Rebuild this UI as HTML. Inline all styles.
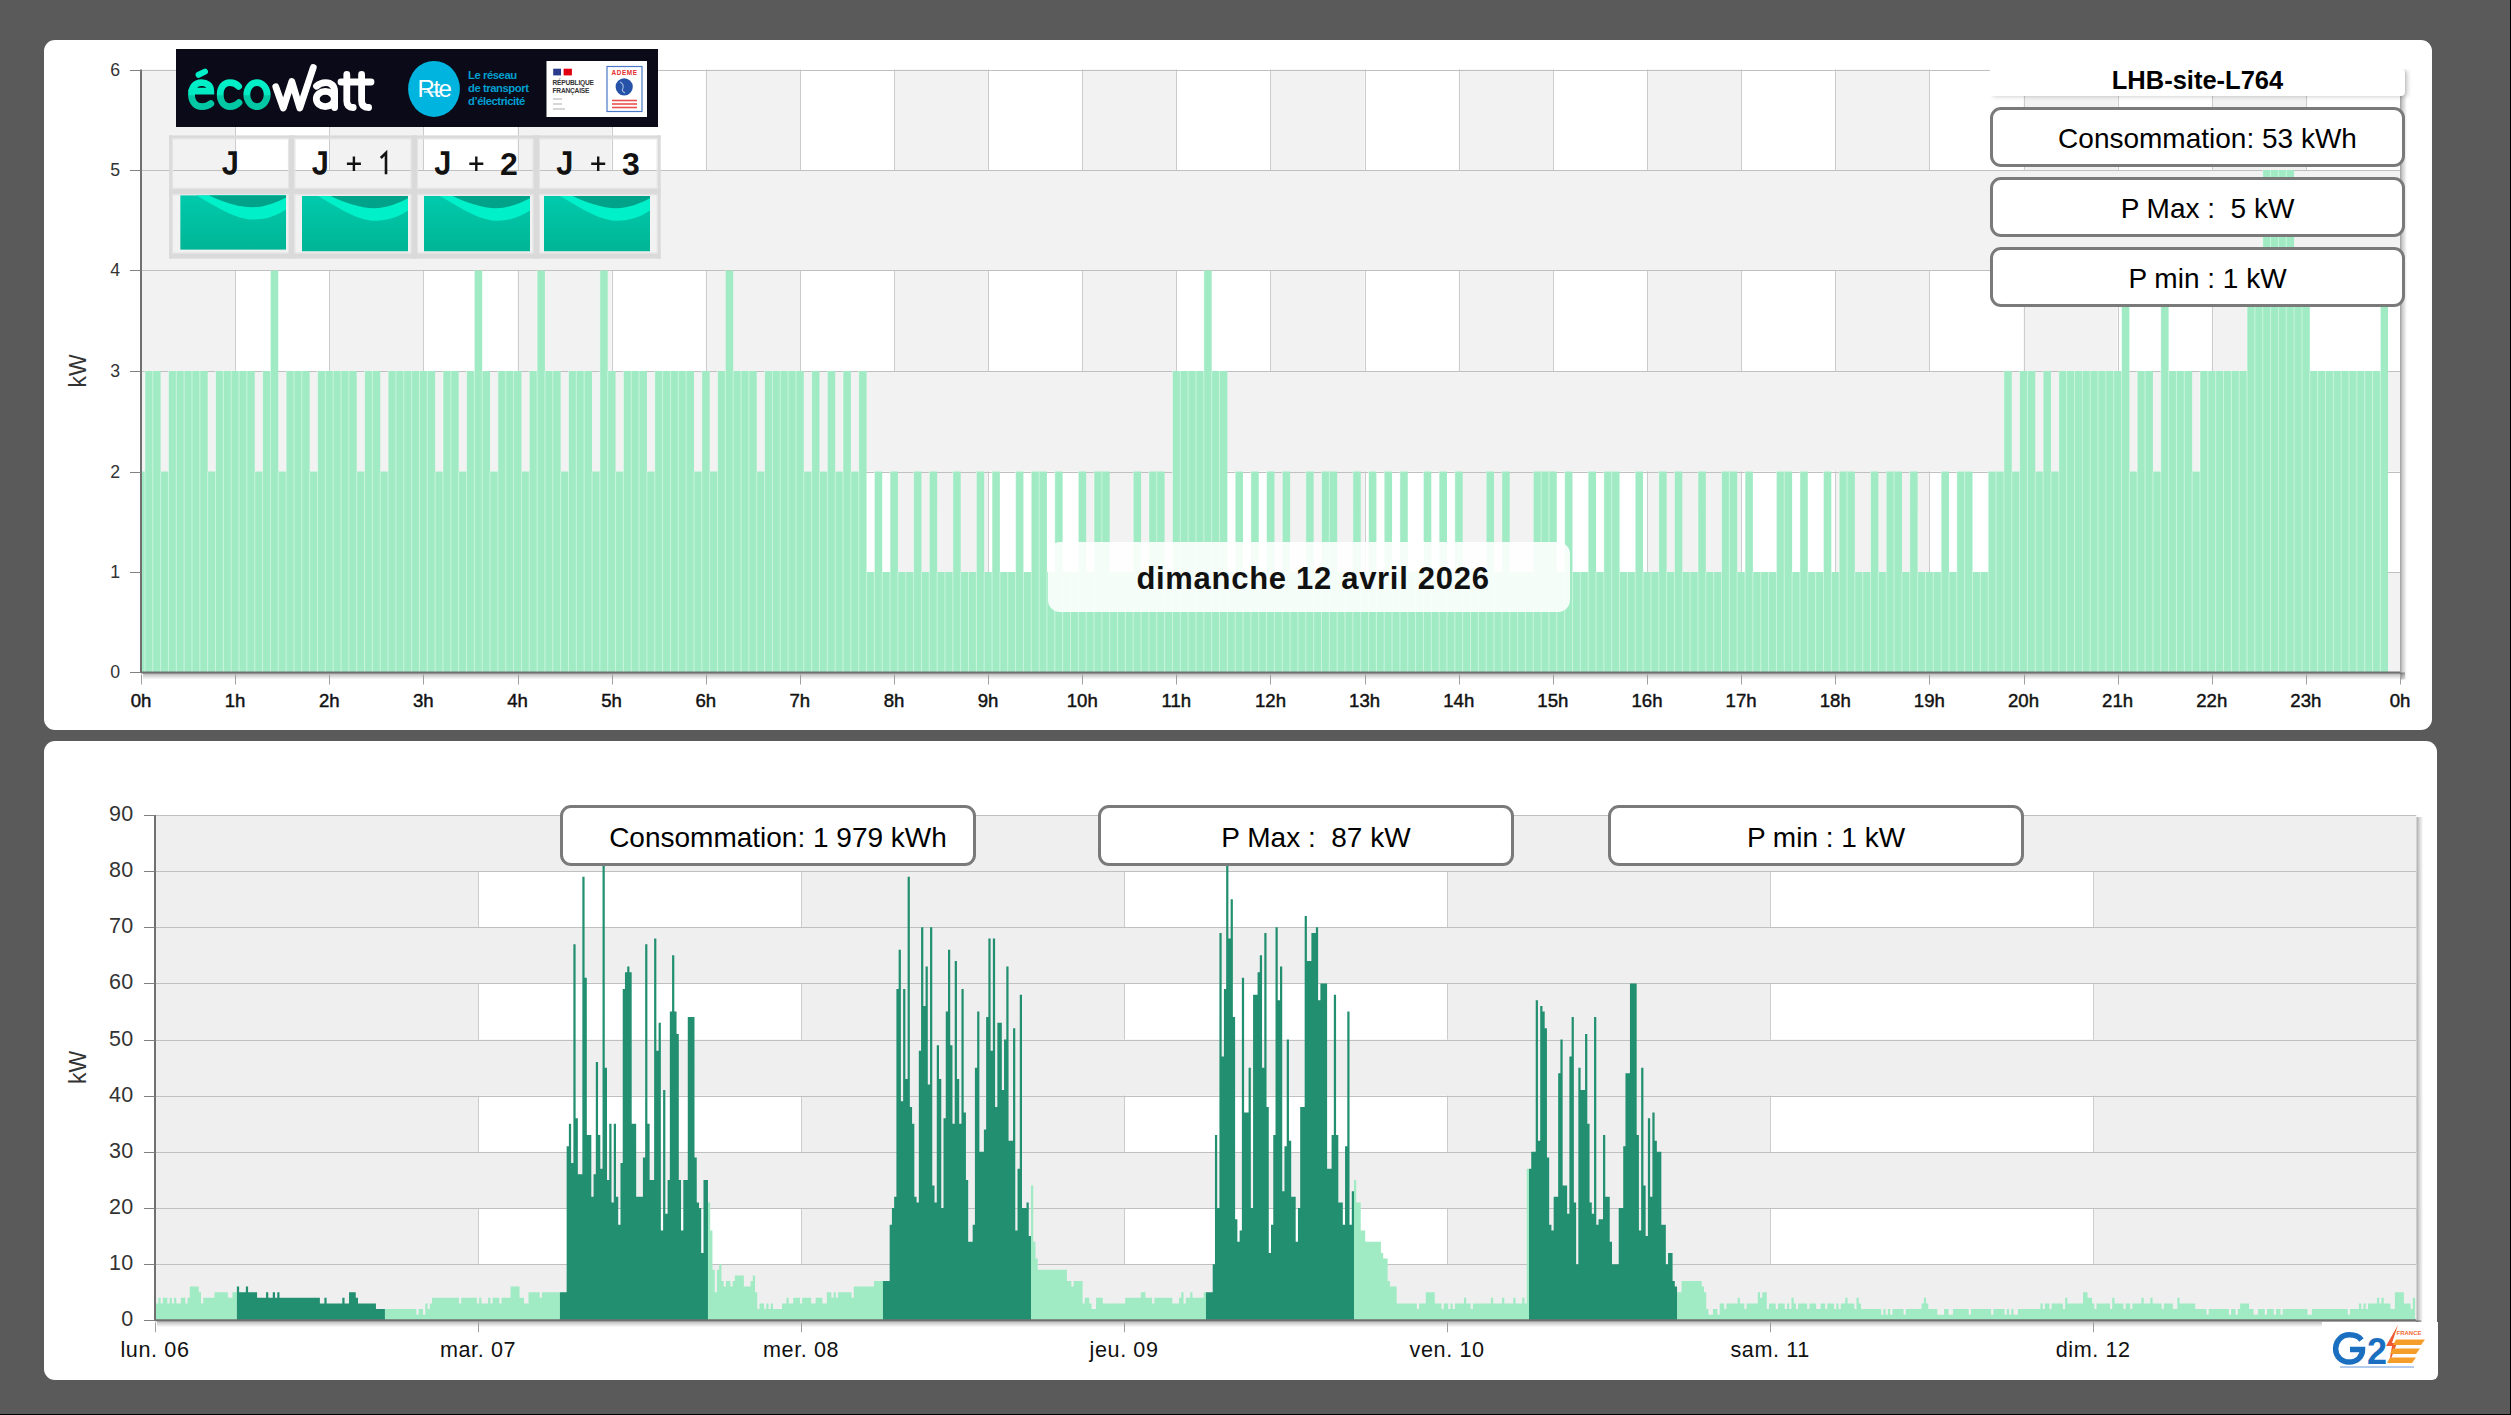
<!DOCTYPE html><html><head><meta charset="utf-8"><style>
html,body{margin:0;padding:0;}
body{width:2511px;height:1415px;background:#5a5a5a;position:relative;overflow:hidden;font-family:"Liberation Sans",sans-serif;}
.panel{position:absolute;background:#fff;border-radius:11px;}
svg{position:absolute;left:0;top:0;}
text{font-family:"Liberation Sans",sans-serif;}
</style></head><body>
<div class="panel" style="left:44px;top:40px;width:2388px;height:690px"></div>
<div class="panel" style="left:44px;top:741px;width:2393px;height:639px"></div>
<svg width="2511" height="1415" viewBox="0 0 2511 1415">
<defs><linearGradient id="shr" x1="0" y1="0" x2="1" y2="0"><stop offset="0" stop-color="#000" stop-opacity="0.38"/><stop offset="0.35" stop-color="#000" stop-opacity="0.2"/><stop offset="1" stop-color="#000" stop-opacity="0"/></linearGradient><linearGradient id="shb" x1="0" y1="0" x2="0" y2="1"><stop offset="0" stop-color="#000" stop-opacity="0.38"/><stop offset="0.35" stop-color="#000" stop-opacity="0.2"/><stop offset="1" stop-color="#000" stop-opacity="0"/></linearGradient></defs>
<defs><filter id="sh" x="-5%" y="-5%" width="110%" height="110%"><feGaussianBlur stdDeviation="2"/></filter><filter id="sh2" x="-10%" y="-10%" width="120%" height="130%"><feGaussianBlur stdDeviation="2.5"/></filter></defs>
<rect x="2400.0" y="71.5" width="7" height="608.0" fill="url(#shr)"/>
<rect x="143.0" y="672.5" width="2262.0" height="7" fill="url(#shb)"/>
<rect x="141.0" y="69.5" width="2259.0" height="603.0" fill="#fff"/>
<rect x="141.0" y="69.5" width="94.125" height="603.0" fill="#f2f2f2"/>
<rect x="329.25" y="69.5" width="94.125" height="603.0" fill="#f2f2f2"/>
<rect x="517.5" y="69.5" width="94.125" height="603.0" fill="#f2f2f2"/>
<rect x="705.75" y="69.5" width="94.125" height="603.0" fill="#f2f2f2"/>
<rect x="894.0" y="69.5" width="94.125" height="603.0" fill="#f2f2f2"/>
<rect x="1082.25" y="69.5" width="94.125" height="603.0" fill="#f2f2f2"/>
<rect x="1270.5" y="69.5" width="94.125" height="603.0" fill="#f2f2f2"/>
<rect x="1458.75" y="69.5" width="94.125" height="603.0" fill="#f2f2f2"/>
<rect x="1647.0" y="69.5" width="94.125" height="603.0" fill="#f2f2f2"/>
<rect x="1835.25" y="69.5" width="94.125" height="603.0" fill="#f2f2f2"/>
<rect x="2023.5" y="69.5" width="94.125" height="603.0" fill="#f2f2f2"/>
<rect x="2211.75" y="69.5" width="94.125" height="603.0" fill="#f2f2f2"/>
<line x1="235.5" y1="69.5" x2="235.5" y2="672.5" stroke="#cccccc" stroke-width="1"/>
<line x1="329.5" y1="69.5" x2="329.5" y2="672.5" stroke="#cccccc" stroke-width="1"/>
<line x1="423.5" y1="69.5" x2="423.5" y2="672.5" stroke="#cccccc" stroke-width="1"/>
<line x1="518.5" y1="69.5" x2="518.5" y2="672.5" stroke="#cccccc" stroke-width="1"/>
<line x1="612.5" y1="69.5" x2="612.5" y2="672.5" stroke="#cccccc" stroke-width="1"/>
<line x1="706.5" y1="69.5" x2="706.5" y2="672.5" stroke="#cccccc" stroke-width="1"/>
<line x1="800.5" y1="69.5" x2="800.5" y2="672.5" stroke="#cccccc" stroke-width="1"/>
<line x1="894.5" y1="69.5" x2="894.5" y2="672.5" stroke="#cccccc" stroke-width="1"/>
<line x1="988.5" y1="69.5" x2="988.5" y2="672.5" stroke="#cccccc" stroke-width="1"/>
<line x1="1082.5" y1="69.5" x2="1082.5" y2="672.5" stroke="#cccccc" stroke-width="1"/>
<line x1="1176.5" y1="69.5" x2="1176.5" y2="672.5" stroke="#cccccc" stroke-width="1"/>
<line x1="1270.5" y1="69.5" x2="1270.5" y2="672.5" stroke="#cccccc" stroke-width="1"/>
<line x1="1365.5" y1="69.5" x2="1365.5" y2="672.5" stroke="#cccccc" stroke-width="1"/>
<line x1="1459.5" y1="69.5" x2="1459.5" y2="672.5" stroke="#cccccc" stroke-width="1"/>
<line x1="1553.5" y1="69.5" x2="1553.5" y2="672.5" stroke="#cccccc" stroke-width="1"/>
<line x1="1647.5" y1="69.5" x2="1647.5" y2="672.5" stroke="#cccccc" stroke-width="1"/>
<line x1="1741.5" y1="69.5" x2="1741.5" y2="672.5" stroke="#cccccc" stroke-width="1"/>
<line x1="1835.5" y1="69.5" x2="1835.5" y2="672.5" stroke="#cccccc" stroke-width="1"/>
<line x1="1929.5" y1="69.5" x2="1929.5" y2="672.5" stroke="#cccccc" stroke-width="1"/>
<line x1="2024.5" y1="69.5" x2="2024.5" y2="672.5" stroke="#cccccc" stroke-width="1"/>
<line x1="2118.5" y1="69.5" x2="2118.5" y2="672.5" stroke="#cccccc" stroke-width="1"/>
<line x1="2212.5" y1="69.5" x2="2212.5" y2="672.5" stroke="#cccccc" stroke-width="1"/>
<line x1="2306.5" y1="69.5" x2="2306.5" y2="672.5" stroke="#cccccc" stroke-width="1"/>
<rect x="141.0" y="572.0" width="2259.0" height="100.5" fill="#f2f2f2"/>
<rect x="141.0" y="371.0" width="2259.0" height="100.5" fill="#f2f2f2"/>
<rect x="141.0" y="170.0" width="2259.0" height="100.5" fill="#f2f2f2"/>
<line x1="141.0" y1="572.5" x2="2400.0" y2="572.5" stroke="#c0c0c0" stroke-width="1"/>
<line x1="141.0" y1="472.5" x2="2400.0" y2="472.5" stroke="#c0c0c0" stroke-width="1"/>
<line x1="141.0" y1="371.5" x2="2400.0" y2="371.5" stroke="#c0c0c0" stroke-width="1"/>
<line x1="141.0" y1="270.5" x2="2400.0" y2="270.5" stroke="#c0c0c0" stroke-width="1"/>
<line x1="141.0" y1="170.5" x2="2400.0" y2="170.5" stroke="#c0c0c0" stroke-width="1"/>
<line x1="141.0" y1="70.5" x2="2400.0" y2="70.5" stroke="#c0c0c0" stroke-width="1"/>
<g clip-path="inset(0)">
<clipPath id="tc"><rect x="141.0" y="69.5" width="2259.0" height="603.0"/></clipPath>
<g clip-path="url(#tc)">
<path d="M137.08 471.50h7.844V672.5h-7.844ZM144.92 371.00h7.844V672.5h-7.844ZM152.77 371.00h7.844V672.5h-7.844ZM160.61 471.50h7.844V672.5h-7.844ZM168.45 371.00h7.844V672.5h-7.844ZM176.30 371.00h7.844V672.5h-7.844ZM184.14 371.00h7.844V672.5h-7.844ZM191.98 371.00h7.844V672.5h-7.844ZM199.83 371.00h7.844V672.5h-7.844ZM207.67 471.50h7.844V672.5h-7.844ZM215.52 371.00h7.844V672.5h-7.844ZM223.36 371.00h7.844V672.5h-7.844ZM231.20 371.00h7.844V672.5h-7.844ZM239.05 371.00h7.844V672.5h-7.844ZM246.89 371.00h7.844V672.5h-7.844ZM254.73 471.50h7.844V672.5h-7.844ZM262.58 371.00h7.844V672.5h-7.844ZM270.42 270.50h7.844V672.5h-7.844ZM278.27 471.50h7.844V672.5h-7.844ZM286.11 371.00h7.844V672.5h-7.844ZM293.95 371.00h7.844V672.5h-7.844ZM301.80 371.00h7.844V672.5h-7.844ZM309.64 471.50h7.844V672.5h-7.844ZM317.48 371.00h7.844V672.5h-7.844ZM325.33 371.00h7.844V672.5h-7.844ZM333.17 371.00h7.844V672.5h-7.844ZM341.02 371.00h7.844V672.5h-7.844ZM348.86 371.00h7.844V672.5h-7.844ZM356.70 471.50h7.844V672.5h-7.844ZM364.55 371.00h7.844V672.5h-7.844ZM372.39 371.00h7.844V672.5h-7.844ZM380.23 471.50h7.844V672.5h-7.844ZM388.08 371.00h7.844V672.5h-7.844ZM395.92 371.00h7.844V672.5h-7.844ZM403.77 371.00h7.844V672.5h-7.844ZM411.61 371.00h7.844V672.5h-7.844ZM419.45 371.00h7.844V672.5h-7.844ZM427.30 371.00h7.844V672.5h-7.844ZM435.14 471.50h7.844V672.5h-7.844ZM442.98 371.00h7.844V672.5h-7.844ZM450.83 371.00h7.844V672.5h-7.844ZM458.67 471.50h7.844V672.5h-7.844ZM466.52 371.00h7.844V672.5h-7.844ZM474.36 270.50h7.844V672.5h-7.844ZM482.20 371.00h7.844V672.5h-7.844ZM490.05 471.50h7.844V672.5h-7.844ZM497.89 371.00h7.844V672.5h-7.844ZM505.73 371.00h7.844V672.5h-7.844ZM513.58 371.00h7.844V672.5h-7.844ZM521.42 471.50h7.844V672.5h-7.844ZM529.27 371.00h7.844V672.5h-7.844ZM537.11 270.50h7.844V672.5h-7.844ZM544.95 371.00h7.844V672.5h-7.844ZM552.80 371.00h7.844V672.5h-7.844ZM560.64 471.50h7.844V672.5h-7.844ZM568.48 371.00h7.844V672.5h-7.844ZM576.33 371.00h7.844V672.5h-7.844ZM584.17 371.00h7.844V672.5h-7.844ZM592.02 471.50h7.844V672.5h-7.844ZM599.86 270.50h7.844V672.5h-7.844ZM607.70 371.00h7.844V672.5h-7.844ZM615.55 471.50h7.844V672.5h-7.844ZM623.39 371.00h7.844V672.5h-7.844ZM631.23 371.00h7.844V672.5h-7.844ZM639.08 371.00h7.844V672.5h-7.844ZM646.92 471.50h7.844V672.5h-7.844ZM654.77 371.00h7.844V672.5h-7.844ZM662.61 371.00h7.844V672.5h-7.844ZM670.45 371.00h7.844V672.5h-7.844ZM678.30 371.00h7.844V672.5h-7.844ZM686.14 371.00h7.844V672.5h-7.844ZM693.98 471.50h7.844V672.5h-7.844ZM701.83 371.00h7.844V672.5h-7.844ZM709.67 471.50h7.844V672.5h-7.844ZM717.52 371.00h7.844V672.5h-7.844ZM725.36 270.50h7.844V672.5h-7.844ZM733.20 371.00h7.844V672.5h-7.844ZM741.05 371.00h7.844V672.5h-7.844ZM748.89 371.00h7.844V672.5h-7.844ZM756.73 471.50h7.844V672.5h-7.844ZM764.58 371.00h7.844V672.5h-7.844ZM772.42 371.00h7.844V672.5h-7.844ZM780.27 371.00h7.844V672.5h-7.844ZM788.11 371.00h7.844V672.5h-7.844ZM795.95 371.00h7.844V672.5h-7.844ZM803.80 471.50h7.844V672.5h-7.844ZM811.64 371.00h7.844V672.5h-7.844ZM819.48 471.50h7.844V672.5h-7.844ZM827.33 371.00h7.844V672.5h-7.844ZM835.17 471.50h7.844V672.5h-7.844ZM843.02 371.00h7.844V672.5h-7.844ZM850.86 471.50h7.844V672.5h-7.844ZM858.70 371.00h7.844V672.5h-7.844ZM866.55 572.00h7.844V672.5h-7.844ZM874.39 471.50h7.844V672.5h-7.844ZM882.23 572.00h7.844V672.5h-7.844ZM890.08 471.50h7.844V672.5h-7.844ZM897.92 572.00h7.844V672.5h-7.844ZM905.77 572.00h7.844V672.5h-7.844ZM913.61 471.50h7.844V672.5h-7.844ZM921.45 572.00h7.844V672.5h-7.844ZM929.30 471.50h7.844V672.5h-7.844ZM937.14 572.00h7.844V672.5h-7.844ZM944.98 572.00h7.844V672.5h-7.844ZM952.83 471.50h7.844V672.5h-7.844ZM960.67 572.00h7.844V672.5h-7.844ZM968.52 572.00h7.844V672.5h-7.844ZM976.36 471.50h7.844V672.5h-7.844ZM984.20 572.00h7.844V672.5h-7.844ZM992.05 471.50h7.844V672.5h-7.844ZM999.89 572.00h7.844V672.5h-7.844ZM1007.73 572.00h7.844V672.5h-7.844ZM1015.58 471.50h7.844V672.5h-7.844ZM1023.42 572.00h7.844V672.5h-7.844ZM1031.27 471.50h7.844V672.5h-7.844ZM1039.11 471.50h7.844V672.5h-7.844ZM1046.95 572.00h7.844V672.5h-7.844ZM1054.80 471.50h7.844V672.5h-7.844ZM1062.64 572.00h7.844V672.5h-7.844ZM1070.48 572.00h7.844V672.5h-7.844ZM1078.33 471.50h7.844V672.5h-7.844ZM1086.17 572.00h7.844V672.5h-7.844ZM1094.02 471.50h7.844V672.5h-7.844ZM1101.86 471.50h7.844V672.5h-7.844ZM1109.70 572.00h7.844V672.5h-7.844ZM1117.55 572.00h7.844V672.5h-7.844ZM1125.39 572.00h7.844V672.5h-7.844ZM1133.23 471.50h7.844V672.5h-7.844ZM1141.08 572.00h7.844V672.5h-7.844ZM1148.92 471.50h7.844V672.5h-7.844ZM1156.77 471.50h7.844V672.5h-7.844ZM1164.61 572.00h7.844V672.5h-7.844ZM1172.45 371.00h7.844V672.5h-7.844ZM1180.30 371.00h7.844V672.5h-7.844ZM1188.14 371.00h7.844V672.5h-7.844ZM1195.98 371.00h7.844V672.5h-7.844ZM1203.83 270.50h7.844V672.5h-7.844ZM1211.67 371.00h7.844V672.5h-7.844ZM1219.52 371.00h7.844V672.5h-7.844ZM1227.36 572.00h7.844V672.5h-7.844ZM1235.20 471.50h7.844V672.5h-7.844ZM1243.05 572.00h7.844V672.5h-7.844ZM1250.89 471.50h7.844V672.5h-7.844ZM1258.73 572.00h7.844V672.5h-7.844ZM1266.58 471.50h7.844V672.5h-7.844ZM1274.42 572.00h7.844V672.5h-7.844ZM1282.27 471.50h7.844V672.5h-7.844ZM1290.11 572.00h7.844V672.5h-7.844ZM1297.95 572.00h7.844V672.5h-7.844ZM1305.80 471.50h7.844V672.5h-7.844ZM1313.64 572.00h7.844V672.5h-7.844ZM1321.48 471.50h7.844V672.5h-7.844ZM1329.33 471.50h7.844V672.5h-7.844ZM1337.17 572.00h7.844V672.5h-7.844ZM1345.02 572.00h7.844V672.5h-7.844ZM1352.86 471.50h7.844V672.5h-7.844ZM1360.70 572.00h7.844V672.5h-7.844ZM1368.55 471.50h7.844V672.5h-7.844ZM1376.39 572.00h7.844V672.5h-7.844ZM1384.23 471.50h7.844V672.5h-7.844ZM1392.08 572.00h7.844V672.5h-7.844ZM1399.92 471.50h7.844V672.5h-7.844ZM1407.77 572.00h7.844V672.5h-7.844ZM1415.61 572.00h7.844V672.5h-7.844ZM1423.45 471.50h7.844V672.5h-7.844ZM1431.30 572.00h7.844V672.5h-7.844ZM1439.14 471.50h7.844V672.5h-7.844ZM1446.98 572.00h7.844V672.5h-7.844ZM1454.83 471.50h7.844V672.5h-7.844ZM1462.67 572.00h7.844V672.5h-7.844ZM1470.52 572.00h7.844V672.5h-7.844ZM1478.36 572.00h7.844V672.5h-7.844ZM1486.20 471.50h7.844V672.5h-7.844ZM1494.05 572.00h7.844V672.5h-7.844ZM1501.89 471.50h7.844V672.5h-7.844ZM1509.73 572.00h7.844V672.5h-7.844ZM1517.58 572.00h7.844V672.5h-7.844ZM1525.42 572.00h7.844V672.5h-7.844ZM1533.27 471.50h7.844V672.5h-7.844ZM1541.11 471.50h7.844V672.5h-7.844ZM1548.95 471.50h7.844V672.5h-7.844ZM1556.80 572.00h7.844V672.5h-7.844ZM1564.64 471.50h7.844V672.5h-7.844ZM1572.48 572.00h7.844V672.5h-7.844ZM1580.33 572.00h7.844V672.5h-7.844ZM1588.17 471.50h7.844V672.5h-7.844ZM1596.02 572.00h7.844V672.5h-7.844ZM1603.86 471.50h7.844V672.5h-7.844ZM1611.70 471.50h7.844V672.5h-7.844ZM1619.55 572.00h7.844V672.5h-7.844ZM1627.39 572.00h7.844V672.5h-7.844ZM1635.23 471.50h7.844V672.5h-7.844ZM1643.08 572.00h7.844V672.5h-7.844ZM1650.92 572.00h7.844V672.5h-7.844ZM1658.77 471.50h7.844V672.5h-7.844ZM1666.61 572.00h7.844V672.5h-7.844ZM1674.45 471.50h7.844V672.5h-7.844ZM1682.30 572.00h7.844V672.5h-7.844ZM1690.14 572.00h7.844V672.5h-7.844ZM1697.98 471.50h7.844V672.5h-7.844ZM1705.83 572.00h7.844V672.5h-7.844ZM1713.67 572.00h7.844V672.5h-7.844ZM1721.52 471.50h7.844V672.5h-7.844ZM1729.36 471.50h7.844V672.5h-7.844ZM1737.20 572.00h7.844V672.5h-7.844ZM1745.05 471.50h7.844V672.5h-7.844ZM1752.89 572.00h7.844V672.5h-7.844ZM1760.73 572.00h7.844V672.5h-7.844ZM1768.58 572.00h7.844V672.5h-7.844ZM1776.42 471.50h7.844V672.5h-7.844ZM1784.27 471.50h7.844V672.5h-7.844ZM1792.11 572.00h7.844V672.5h-7.844ZM1799.95 471.50h7.844V672.5h-7.844ZM1807.80 572.00h7.844V672.5h-7.844ZM1815.64 572.00h7.844V672.5h-7.844ZM1823.48 471.50h7.844V672.5h-7.844ZM1831.33 572.00h7.844V672.5h-7.844ZM1839.17 471.50h7.844V672.5h-7.844ZM1847.02 471.50h7.844V672.5h-7.844ZM1854.86 572.00h7.844V672.5h-7.844ZM1862.70 572.00h7.844V672.5h-7.844ZM1870.55 471.50h7.844V672.5h-7.844ZM1878.39 572.00h7.844V672.5h-7.844ZM1886.23 471.50h7.844V672.5h-7.844ZM1894.08 471.50h7.844V672.5h-7.844ZM1901.92 572.00h7.844V672.5h-7.844ZM1909.77 471.50h7.844V672.5h-7.844ZM1917.61 572.00h7.844V672.5h-7.844ZM1925.45 572.00h7.844V672.5h-7.844ZM1933.30 572.00h7.844V672.5h-7.844ZM1941.14 471.50h7.844V672.5h-7.844ZM1948.98 572.00h7.844V672.5h-7.844ZM1956.83 471.50h7.844V672.5h-7.844ZM1964.67 471.50h7.844V672.5h-7.844ZM1972.52 572.00h7.844V672.5h-7.844ZM1980.36 572.00h7.844V672.5h-7.844ZM1988.20 471.50h7.844V672.5h-7.844ZM1996.05 471.50h7.844V672.5h-7.844ZM2003.89 371.00h7.844V672.5h-7.844ZM2011.73 471.50h7.844V672.5h-7.844ZM2019.58 371.00h7.844V672.5h-7.844ZM2027.42 371.00h7.844V672.5h-7.844ZM2035.27 471.50h7.844V672.5h-7.844ZM2043.11 371.00h7.844V672.5h-7.844ZM2050.95 471.50h7.844V672.5h-7.844ZM2058.80 371.00h7.844V672.5h-7.844ZM2066.64 371.00h7.844V672.5h-7.844ZM2074.48 371.00h7.844V672.5h-7.844ZM2082.33 371.00h7.844V672.5h-7.844ZM2090.17 371.00h7.844V672.5h-7.844ZM2098.02 371.00h7.844V672.5h-7.844ZM2105.86 371.00h7.844V672.5h-7.844ZM2113.70 371.00h7.844V672.5h-7.844ZM2121.55 270.50h7.844V672.5h-7.844ZM2129.39 471.50h7.844V672.5h-7.844ZM2137.23 371.00h7.844V672.5h-7.844ZM2145.08 371.00h7.844V672.5h-7.844ZM2152.92 471.50h7.844V672.5h-7.844ZM2160.77 270.50h7.844V672.5h-7.844ZM2168.61 371.00h7.844V672.5h-7.844ZM2176.45 371.00h7.844V672.5h-7.844ZM2184.30 371.00h7.844V672.5h-7.844ZM2192.14 471.50h7.844V672.5h-7.844ZM2199.98 371.00h7.844V672.5h-7.844ZM2207.83 371.00h7.844V672.5h-7.844ZM2215.67 371.00h7.844V672.5h-7.844ZM2223.52 371.00h7.844V672.5h-7.844ZM2231.36 371.00h7.844V672.5h-7.844ZM2239.20 371.00h7.844V672.5h-7.844ZM2247.05 270.50h7.844V672.5h-7.844ZM2254.89 270.50h7.844V672.5h-7.844ZM2262.73 170.00h7.844V672.5h-7.844ZM2270.58 170.00h7.844V672.5h-7.844ZM2278.42 170.00h7.844V672.5h-7.844ZM2286.27 170.00h7.844V672.5h-7.844ZM2294.11 270.50h7.844V672.5h-7.844ZM2301.95 270.50h7.844V672.5h-7.844ZM2309.80 371.00h7.844V672.5h-7.844ZM2317.64 371.00h7.844V672.5h-7.844ZM2325.48 371.00h7.844V672.5h-7.844ZM2333.33 371.00h7.844V672.5h-7.844ZM2341.17 371.00h7.844V672.5h-7.844ZM2349.02 371.00h7.844V672.5h-7.844ZM2356.86 371.00h7.844V672.5h-7.844ZM2364.70 371.00h7.844V672.5h-7.844ZM2372.55 371.00h7.844V672.5h-7.844ZM2380.39 270.50h7.844V672.5h-7.844Z" fill="#a0ebc4"/>
<path d="M137.08 471.50V672.5M144.92 371.00V672.5M152.77 371.00V672.5M160.61 471.50V672.5M168.45 371.00V672.5M176.30 371.00V672.5M184.14 371.00V672.5M191.98 371.00V672.5M199.83 371.00V672.5M207.67 471.50V672.5M215.52 371.00V672.5M223.36 371.00V672.5M231.20 371.00V672.5M239.05 371.00V672.5M246.89 371.00V672.5M254.73 471.50V672.5M262.58 371.00V672.5M270.42 270.50V672.5M278.27 471.50V672.5M286.11 371.00V672.5M293.95 371.00V672.5M301.80 371.00V672.5M309.64 471.50V672.5M317.48 371.00V672.5M325.33 371.00V672.5M333.17 371.00V672.5M341.02 371.00V672.5M348.86 371.00V672.5M356.70 471.50V672.5M364.55 371.00V672.5M372.39 371.00V672.5M380.23 471.50V672.5M388.08 371.00V672.5M395.92 371.00V672.5M403.77 371.00V672.5M411.61 371.00V672.5M419.45 371.00V672.5M427.30 371.00V672.5M435.14 471.50V672.5M442.98 371.00V672.5M450.83 371.00V672.5M458.67 471.50V672.5M466.52 371.00V672.5M474.36 270.50V672.5M482.20 371.00V672.5M490.05 471.50V672.5M497.89 371.00V672.5M505.73 371.00V672.5M513.58 371.00V672.5M521.42 471.50V672.5M529.27 371.00V672.5M537.11 270.50V672.5M544.95 371.00V672.5M552.80 371.00V672.5M560.64 471.50V672.5M568.48 371.00V672.5M576.33 371.00V672.5M584.17 371.00V672.5M592.02 471.50V672.5M599.86 270.50V672.5M607.70 371.00V672.5M615.55 471.50V672.5M623.39 371.00V672.5M631.23 371.00V672.5M639.08 371.00V672.5M646.92 471.50V672.5M654.77 371.00V672.5M662.61 371.00V672.5M670.45 371.00V672.5M678.30 371.00V672.5M686.14 371.00V672.5M693.98 471.50V672.5M701.83 371.00V672.5M709.67 471.50V672.5M717.52 371.00V672.5M725.36 270.50V672.5M733.20 371.00V672.5M741.05 371.00V672.5M748.89 371.00V672.5M756.73 471.50V672.5M764.58 371.00V672.5M772.42 371.00V672.5M780.27 371.00V672.5M788.11 371.00V672.5M795.95 371.00V672.5M803.80 471.50V672.5M811.64 371.00V672.5M819.48 471.50V672.5M827.33 371.00V672.5M835.17 471.50V672.5M843.02 371.00V672.5M850.86 471.50V672.5M858.70 371.00V672.5M866.55 572.00V672.5M874.39 471.50V672.5M882.23 572.00V672.5M890.08 471.50V672.5M897.92 572.00V672.5M905.77 572.00V672.5M913.61 471.50V672.5M921.45 572.00V672.5M929.30 471.50V672.5M937.14 572.00V672.5M944.98 572.00V672.5M952.83 471.50V672.5M960.67 572.00V672.5M968.52 572.00V672.5M976.36 471.50V672.5M984.20 572.00V672.5M992.05 471.50V672.5M999.89 572.00V672.5M1007.73 572.00V672.5M1015.58 471.50V672.5M1023.42 572.00V672.5M1031.27 471.50V672.5M1039.11 471.50V672.5M1046.95 572.00V672.5M1054.80 471.50V672.5M1062.64 572.00V672.5M1070.48 572.00V672.5M1078.33 471.50V672.5M1086.17 572.00V672.5M1094.02 471.50V672.5M1101.86 471.50V672.5M1109.70 572.00V672.5M1117.55 572.00V672.5M1125.39 572.00V672.5M1133.23 471.50V672.5M1141.08 572.00V672.5M1148.92 471.50V672.5M1156.77 471.50V672.5M1164.61 572.00V672.5M1172.45 371.00V672.5M1180.30 371.00V672.5M1188.14 371.00V672.5M1195.98 371.00V672.5M1203.83 270.50V672.5M1211.67 371.00V672.5M1219.52 371.00V672.5M1227.36 572.00V672.5M1235.20 471.50V672.5M1243.05 572.00V672.5M1250.89 471.50V672.5M1258.73 572.00V672.5M1266.58 471.50V672.5M1274.42 572.00V672.5M1282.27 471.50V672.5M1290.11 572.00V672.5M1297.95 572.00V672.5M1305.80 471.50V672.5M1313.64 572.00V672.5M1321.48 471.50V672.5M1329.33 471.50V672.5M1337.17 572.00V672.5M1345.02 572.00V672.5M1352.86 471.50V672.5M1360.70 572.00V672.5M1368.55 471.50V672.5M1376.39 572.00V672.5M1384.23 471.50V672.5M1392.08 572.00V672.5M1399.92 471.50V672.5M1407.77 572.00V672.5M1415.61 572.00V672.5M1423.45 471.50V672.5M1431.30 572.00V672.5M1439.14 471.50V672.5M1446.98 572.00V672.5M1454.83 471.50V672.5M1462.67 572.00V672.5M1470.52 572.00V672.5M1478.36 572.00V672.5M1486.20 471.50V672.5M1494.05 572.00V672.5M1501.89 471.50V672.5M1509.73 572.00V672.5M1517.58 572.00V672.5M1525.42 572.00V672.5M1533.27 471.50V672.5M1541.11 471.50V672.5M1548.95 471.50V672.5M1556.80 572.00V672.5M1564.64 471.50V672.5M1572.48 572.00V672.5M1580.33 572.00V672.5M1588.17 471.50V672.5M1596.02 572.00V672.5M1603.86 471.50V672.5M1611.70 471.50V672.5M1619.55 572.00V672.5M1627.39 572.00V672.5M1635.23 471.50V672.5M1643.08 572.00V672.5M1650.92 572.00V672.5M1658.77 471.50V672.5M1666.61 572.00V672.5M1674.45 471.50V672.5M1682.30 572.00V672.5M1690.14 572.00V672.5M1697.98 471.50V672.5M1705.83 572.00V672.5M1713.67 572.00V672.5M1721.52 471.50V672.5M1729.36 471.50V672.5M1737.20 572.00V672.5M1745.05 471.50V672.5M1752.89 572.00V672.5M1760.73 572.00V672.5M1768.58 572.00V672.5M1776.42 471.50V672.5M1784.27 471.50V672.5M1792.11 572.00V672.5M1799.95 471.50V672.5M1807.80 572.00V672.5M1815.64 572.00V672.5M1823.48 471.50V672.5M1831.33 572.00V672.5M1839.17 471.50V672.5M1847.02 471.50V672.5M1854.86 572.00V672.5M1862.70 572.00V672.5M1870.55 471.50V672.5M1878.39 572.00V672.5M1886.23 471.50V672.5M1894.08 471.50V672.5M1901.92 572.00V672.5M1909.77 471.50V672.5M1917.61 572.00V672.5M1925.45 572.00V672.5M1933.30 572.00V672.5M1941.14 471.50V672.5M1948.98 572.00V672.5M1956.83 471.50V672.5M1964.67 471.50V672.5M1972.52 572.00V672.5M1980.36 572.00V672.5M1988.20 471.50V672.5M1996.05 471.50V672.5M2003.89 371.00V672.5M2011.73 471.50V672.5M2019.58 371.00V672.5M2027.42 371.00V672.5M2035.27 471.50V672.5M2043.11 371.00V672.5M2050.95 471.50V672.5M2058.80 371.00V672.5M2066.64 371.00V672.5M2074.48 371.00V672.5M2082.33 371.00V672.5M2090.17 371.00V672.5M2098.02 371.00V672.5M2105.86 371.00V672.5M2113.70 371.00V672.5M2121.55 270.50V672.5M2129.39 471.50V672.5M2137.23 371.00V672.5M2145.08 371.00V672.5M2152.92 471.50V672.5M2160.77 270.50V672.5M2168.61 371.00V672.5M2176.45 371.00V672.5M2184.30 371.00V672.5M2192.14 471.50V672.5M2199.98 371.00V672.5M2207.83 371.00V672.5M2215.67 371.00V672.5M2223.52 371.00V672.5M2231.36 371.00V672.5M2239.20 371.00V672.5M2247.05 270.50V672.5M2254.89 270.50V672.5M2262.73 170.00V672.5M2270.58 170.00V672.5M2278.42 170.00V672.5M2286.27 170.00V672.5M2294.11 270.50V672.5M2301.95 270.50V672.5M2309.80 371.00V672.5M2317.64 371.00V672.5M2325.48 371.00V672.5M2333.33 371.00V672.5M2341.17 371.00V672.5M2349.02 371.00V672.5M2356.86 371.00V672.5M2364.70 371.00V672.5M2372.55 371.00V672.5M2380.39 270.50V672.5" stroke="#ffffff" stroke-opacity="0.45" stroke-width="1"/>
</g></g>
<line x1="141.0" y1="672.5" x2="2400.0" y2="672.5" stroke="#707070" stroke-width="2"/>
<line x1="141.0" y1="69.5" x2="141.0" y2="672.5" stroke="#707070" stroke-width="2"/>
<line x1="130" y1="672.5" x2="141.0" y2="672.5" stroke="#808080" stroke-width="1"/>
<text x="120" y="678.0" font-size="17.7" fill="#333" text-anchor="end">0</text>
<line x1="130" y1="572.5" x2="141.0" y2="572.5" stroke="#808080" stroke-width="1"/>
<text x="120" y="578.0" font-size="17.7" fill="#333" text-anchor="end">1</text>
<line x1="130" y1="472.5" x2="141.0" y2="472.5" stroke="#808080" stroke-width="1"/>
<text x="120" y="478.0" font-size="17.7" fill="#333" text-anchor="end">2</text>
<line x1="130" y1="371.5" x2="141.0" y2="371.5" stroke="#808080" stroke-width="1"/>
<text x="120" y="377.0" font-size="17.7" fill="#333" text-anchor="end">3</text>
<line x1="130" y1="270.5" x2="141.0" y2="270.5" stroke="#808080" stroke-width="1"/>
<text x="120" y="276.0" font-size="17.7" fill="#333" text-anchor="end">4</text>
<line x1="130" y1="170.5" x2="141.0" y2="170.5" stroke="#808080" stroke-width="1"/>
<text x="120" y="176.0" font-size="17.7" fill="#333" text-anchor="end">5</text>
<line x1="130" y1="70.5" x2="141.0" y2="70.5" stroke="#808080" stroke-width="1"/>
<text x="120" y="76.0" font-size="17.7" fill="#333" text-anchor="end">6</text>
<line x1="141.5" y1="674.5" x2="141.5" y2="684.5" stroke="#a0a0a0" stroke-width="1"/>
<text x="141.0" y="707" font-size="18.6" fill="#111" stroke="#111" stroke-width="0.45" text-anchor="middle">0h</text>
<line x1="235.5" y1="674.5" x2="235.5" y2="684.5" stroke="#a0a0a0" stroke-width="1"/>
<text x="235.125" y="707" font-size="18.6" fill="#111" stroke="#111" stroke-width="0.45" text-anchor="middle">1h</text>
<line x1="329.5" y1="674.5" x2="329.5" y2="684.5" stroke="#a0a0a0" stroke-width="1"/>
<text x="329.25" y="707" font-size="18.6" fill="#111" stroke="#111" stroke-width="0.45" text-anchor="middle">2h</text>
<line x1="423.5" y1="674.5" x2="423.5" y2="684.5" stroke="#a0a0a0" stroke-width="1"/>
<text x="423.375" y="707" font-size="18.6" fill="#111" stroke="#111" stroke-width="0.45" text-anchor="middle">3h</text>
<line x1="518.5" y1="674.5" x2="518.5" y2="684.5" stroke="#a0a0a0" stroke-width="1"/>
<text x="517.5" y="707" font-size="18.6" fill="#111" stroke="#111" stroke-width="0.45" text-anchor="middle">4h</text>
<line x1="612.5" y1="674.5" x2="612.5" y2="684.5" stroke="#a0a0a0" stroke-width="1"/>
<text x="611.625" y="707" font-size="18.6" fill="#111" stroke="#111" stroke-width="0.45" text-anchor="middle">5h</text>
<line x1="706.5" y1="674.5" x2="706.5" y2="684.5" stroke="#a0a0a0" stroke-width="1"/>
<text x="705.75" y="707" font-size="18.6" fill="#111" stroke="#111" stroke-width="0.45" text-anchor="middle">6h</text>
<line x1="800.5" y1="674.5" x2="800.5" y2="684.5" stroke="#a0a0a0" stroke-width="1"/>
<text x="799.875" y="707" font-size="18.6" fill="#111" stroke="#111" stroke-width="0.45" text-anchor="middle">7h</text>
<line x1="894.5" y1="674.5" x2="894.5" y2="684.5" stroke="#a0a0a0" stroke-width="1"/>
<text x="894.0" y="707" font-size="18.6" fill="#111" stroke="#111" stroke-width="0.45" text-anchor="middle">8h</text>
<line x1="988.5" y1="674.5" x2="988.5" y2="684.5" stroke="#a0a0a0" stroke-width="1"/>
<text x="988.125" y="707" font-size="18.6" fill="#111" stroke="#111" stroke-width="0.45" text-anchor="middle">9h</text>
<line x1="1082.5" y1="674.5" x2="1082.5" y2="684.5" stroke="#a0a0a0" stroke-width="1"/>
<text x="1082.25" y="707" font-size="18.6" fill="#111" stroke="#111" stroke-width="0.45" text-anchor="middle">10h</text>
<line x1="1176.5" y1="674.5" x2="1176.5" y2="684.5" stroke="#a0a0a0" stroke-width="1"/>
<text x="1176.375" y="707" font-size="18.6" fill="#111" stroke="#111" stroke-width="0.45" text-anchor="middle">11h</text>
<line x1="1270.5" y1="674.5" x2="1270.5" y2="684.5" stroke="#a0a0a0" stroke-width="1"/>
<text x="1270.5" y="707" font-size="18.6" fill="#111" stroke="#111" stroke-width="0.45" text-anchor="middle">12h</text>
<line x1="1365.5" y1="674.5" x2="1365.5" y2="684.5" stroke="#a0a0a0" stroke-width="1"/>
<text x="1364.625" y="707" font-size="18.6" fill="#111" stroke="#111" stroke-width="0.45" text-anchor="middle">13h</text>
<line x1="1459.5" y1="674.5" x2="1459.5" y2="684.5" stroke="#a0a0a0" stroke-width="1"/>
<text x="1458.75" y="707" font-size="18.6" fill="#111" stroke="#111" stroke-width="0.45" text-anchor="middle">14h</text>
<line x1="1553.5" y1="674.5" x2="1553.5" y2="684.5" stroke="#a0a0a0" stroke-width="1"/>
<text x="1552.875" y="707" font-size="18.6" fill="#111" stroke="#111" stroke-width="0.45" text-anchor="middle">15h</text>
<line x1="1647.5" y1="674.5" x2="1647.5" y2="684.5" stroke="#a0a0a0" stroke-width="1"/>
<text x="1647.0" y="707" font-size="18.6" fill="#111" stroke="#111" stroke-width="0.45" text-anchor="middle">16h</text>
<line x1="1741.5" y1="674.5" x2="1741.5" y2="684.5" stroke="#a0a0a0" stroke-width="1"/>
<text x="1741.125" y="707" font-size="18.6" fill="#111" stroke="#111" stroke-width="0.45" text-anchor="middle">17h</text>
<line x1="1835.5" y1="674.5" x2="1835.5" y2="684.5" stroke="#a0a0a0" stroke-width="1"/>
<text x="1835.25" y="707" font-size="18.6" fill="#111" stroke="#111" stroke-width="0.45" text-anchor="middle">18h</text>
<line x1="1929.5" y1="674.5" x2="1929.5" y2="684.5" stroke="#a0a0a0" stroke-width="1"/>
<text x="1929.375" y="707" font-size="18.6" fill="#111" stroke="#111" stroke-width="0.45" text-anchor="middle">19h</text>
<line x1="2024.5" y1="674.5" x2="2024.5" y2="684.5" stroke="#a0a0a0" stroke-width="1"/>
<text x="2023.5" y="707" font-size="18.6" fill="#111" stroke="#111" stroke-width="0.45" text-anchor="middle">20h</text>
<line x1="2118.5" y1="674.5" x2="2118.5" y2="684.5" stroke="#a0a0a0" stroke-width="1"/>
<text x="2117.625" y="707" font-size="18.6" fill="#111" stroke="#111" stroke-width="0.45" text-anchor="middle">21h</text>
<line x1="2212.5" y1="674.5" x2="2212.5" y2="684.5" stroke="#a0a0a0" stroke-width="1"/>
<text x="2211.75" y="707" font-size="18.6" fill="#111" stroke="#111" stroke-width="0.45" text-anchor="middle">22h</text>
<line x1="2306.5" y1="674.5" x2="2306.5" y2="684.5" stroke="#a0a0a0" stroke-width="1"/>
<text x="2305.875" y="707" font-size="18.6" fill="#111" stroke="#111" stroke-width="0.45" text-anchor="middle">23h</text>
<line x1="2400.5" y1="674.5" x2="2400.5" y2="684.5" stroke="#a0a0a0" stroke-width="1"/>
<text x="2400.0" y="707" font-size="18.6" fill="#111" stroke="#111" stroke-width="0.45" text-anchor="middle">0h</text>
<text transform="translate(86.3 371) rotate(-90)" font-size="23" fill="#333" text-anchor="middle">kW</text>
<rect x="2416.2" y="817.0" width="7" height="510.29999999999995" fill="url(#shr)"/>
<rect x="157.0" y="1320.3" width="2264.2" height="7" fill="url(#shb)"/>
<rect x="155.0" y="815.0" width="2261.2" height="505.29999999999995" fill="#fff"/>
<rect x="155.0" y="815.0" width="323.0285714285714" height="505.29999999999995" fill="#efefef"/>
<rect x="801.0571428571428" y="815.0" width="323.0285714285714" height="505.29999999999995" fill="#efefef"/>
<rect x="1447.1142857142856" y="815.0" width="323.0285714285714" height="505.29999999999995" fill="#efefef"/>
<rect x="2093.1714285714284" y="815.0" width="323.0285714285714" height="505.29999999999995" fill="#efefef"/>
<line x1="478.5" y1="815.0" x2="478.5" y2="1320.3" stroke="#cccccc" stroke-width="1"/>
<line x1="801.5" y1="815.0" x2="801.5" y2="1320.3" stroke="#cccccc" stroke-width="1"/>
<line x1="1124.5" y1="815.0" x2="1124.5" y2="1320.3" stroke="#cccccc" stroke-width="1"/>
<line x1="1447.5" y1="815.0" x2="1447.5" y2="1320.3" stroke="#cccccc" stroke-width="1"/>
<line x1="1770.5" y1="815.0" x2="1770.5" y2="1320.3" stroke="#cccccc" stroke-width="1"/>
<line x1="2093.5" y1="815.0" x2="2093.5" y2="1320.3" stroke="#cccccc" stroke-width="1"/>
<rect x="155.0" y="1264.1555555555556" width="2261.2" height="56.14444444444444" fill="#efefef"/>
<rect x="155.0" y="1151.8666666666666" width="2261.2" height="56.14444444444444" fill="#efefef"/>
<rect x="155.0" y="1039.5777777777778" width="2261.2" height="56.14444444444444" fill="#efefef"/>
<rect x="155.0" y="927.2888888888889" width="2261.2" height="56.14444444444444" fill="#efefef"/>
<rect x="155.0" y="815.0" width="2261.2" height="56.14444444444444" fill="#efefef"/>
<line x1="155.0" y1="1264.5" x2="2416.2" y2="1264.5" stroke="#c0c0c0" stroke-width="1"/>
<line x1="155.0" y1="1208.5" x2="2416.2" y2="1208.5" stroke="#c0c0c0" stroke-width="1"/>
<line x1="155.0" y1="1152.5" x2="2416.2" y2="1152.5" stroke="#c0c0c0" stroke-width="1"/>
<line x1="155.0" y1="1096.5" x2="2416.2" y2="1096.5" stroke="#c0c0c0" stroke-width="1"/>
<line x1="155.0" y1="1040.5" x2="2416.2" y2="1040.5" stroke="#c0c0c0" stroke-width="1"/>
<line x1="155.0" y1="983.5" x2="2416.2" y2="983.5" stroke="#c0c0c0" stroke-width="1"/>
<line x1="155.0" y1="927.5" x2="2416.2" y2="927.5" stroke="#c0c0c0" stroke-width="1"/>
<line x1="155.0" y1="871.5" x2="2416.2" y2="871.5" stroke="#c0c0c0" stroke-width="1"/>
<line x1="155.0" y1="815.5" x2="2416.2" y2="815.5" stroke="#c0c0c0" stroke-width="1"/>
<clipPath id="bc"><rect x="155.0" y="775.0" width="2261.2" height="545.3"/></clipPath>
<g clip-path="url(#bc)">
<path d="M153.88 1297.84h2.243V1320.3h-2.243ZM156.12 1303.46h2.243V1320.3h-2.243ZM158.36 1297.84h2.243V1320.3h-2.243ZM160.61 1303.46h2.243V1320.3h-2.243ZM162.85 1297.84h2.243V1320.3h-2.243ZM165.09 1297.84h2.243V1320.3h-2.243ZM167.34 1303.46h2.243V1320.3h-2.243ZM169.58 1297.84h2.243V1320.3h-2.243ZM171.82 1303.46h2.243V1320.3h-2.243ZM174.07 1297.84h2.243V1320.3h-2.243ZM176.31 1303.46h2.243V1320.3h-2.243ZM178.55 1303.46h2.243V1320.3h-2.243ZM180.80 1297.84h2.243V1320.3h-2.243ZM183.04 1297.84h2.243V1320.3h-2.243ZM185.28 1303.46h2.243V1320.3h-2.243ZM187.53 1297.84h2.243V1320.3h-2.243ZM189.77 1286.61h2.243V1320.3h-2.243ZM192.01 1286.61h2.243V1320.3h-2.243ZM194.26 1286.61h2.243V1320.3h-2.243ZM196.50 1286.61h2.243V1320.3h-2.243ZM198.74 1292.23h2.243V1320.3h-2.243ZM200.99 1303.46h2.243V1320.3h-2.243ZM203.23 1297.84h2.243V1320.3h-2.243ZM205.47 1297.84h2.243V1320.3h-2.243ZM207.72 1297.84h2.243V1320.3h-2.243ZM209.96 1297.84h2.243V1320.3h-2.243ZM212.20 1297.84h2.243V1320.3h-2.243ZM214.45 1292.23h2.243V1320.3h-2.243ZM216.69 1292.23h2.243V1320.3h-2.243ZM218.93 1292.23h2.243V1320.3h-2.243ZM221.18 1292.23h2.243V1320.3h-2.243ZM223.42 1292.23h2.243V1320.3h-2.243ZM225.66 1292.23h2.243V1320.3h-2.243ZM227.91 1297.84h2.243V1320.3h-2.243ZM230.15 1297.84h2.243V1320.3h-2.243ZM232.39 1292.23h2.243V1320.3h-2.243ZM234.64 1292.23h2.243V1320.3h-2.243ZM384.93 1309.07h2.243V1320.3h-2.243ZM387.18 1309.07h2.243V1320.3h-2.243ZM389.42 1309.07h2.243V1320.3h-2.243ZM391.66 1309.07h2.243V1320.3h-2.243ZM393.91 1309.07h2.243V1320.3h-2.243ZM396.15 1309.07h2.243V1320.3h-2.243ZM398.39 1309.07h2.243V1320.3h-2.243ZM400.64 1309.07h2.243V1320.3h-2.243ZM402.88 1309.07h2.243V1320.3h-2.243ZM405.12 1309.07h2.243V1320.3h-2.243ZM407.37 1309.07h2.243V1320.3h-2.243ZM409.61 1309.07h2.243V1320.3h-2.243ZM411.85 1309.07h2.243V1320.3h-2.243ZM414.10 1309.07h2.243V1320.3h-2.243ZM416.34 1314.69h2.243V1320.3h-2.243ZM418.58 1309.07h2.243V1320.3h-2.243ZM420.83 1309.07h2.243V1320.3h-2.243ZM423.07 1314.69h2.243V1320.3h-2.243ZM425.31 1303.46h2.243V1320.3h-2.243ZM427.56 1309.07h2.243V1320.3h-2.243ZM429.80 1303.46h2.243V1320.3h-2.243ZM432.04 1297.84h2.243V1320.3h-2.243ZM434.29 1297.84h2.243V1320.3h-2.243ZM436.53 1297.84h2.243V1320.3h-2.243ZM438.77 1297.84h2.243V1320.3h-2.243ZM441.01 1297.84h2.243V1320.3h-2.243ZM443.26 1297.84h2.243V1320.3h-2.243ZM445.50 1297.84h2.243V1320.3h-2.243ZM447.74 1297.84h2.243V1320.3h-2.243ZM449.99 1297.84h2.243V1320.3h-2.243ZM452.23 1297.84h2.243V1320.3h-2.243ZM454.47 1297.84h2.243V1320.3h-2.243ZM456.72 1297.84h2.243V1320.3h-2.243ZM458.96 1303.46h2.243V1320.3h-2.243ZM461.20 1297.84h2.243V1320.3h-2.243ZM463.45 1297.84h2.243V1320.3h-2.243ZM465.69 1297.84h2.243V1320.3h-2.243ZM467.93 1297.84h2.243V1320.3h-2.243ZM470.18 1297.84h2.243V1320.3h-2.243ZM472.42 1297.84h2.243V1320.3h-2.243ZM474.66 1297.84h2.243V1320.3h-2.243ZM476.91 1303.46h2.243V1320.3h-2.243ZM479.15 1297.84h2.243V1320.3h-2.243ZM481.39 1303.46h2.243V1320.3h-2.243ZM483.64 1303.46h2.243V1320.3h-2.243ZM485.88 1303.46h2.243V1320.3h-2.243ZM488.12 1297.84h2.243V1320.3h-2.243ZM490.37 1303.46h2.243V1320.3h-2.243ZM492.61 1297.84h2.243V1320.3h-2.243ZM494.85 1297.84h2.243V1320.3h-2.243ZM497.10 1297.84h2.243V1320.3h-2.243ZM499.34 1303.46h2.243V1320.3h-2.243ZM501.58 1297.84h2.243V1320.3h-2.243ZM503.83 1297.84h2.243V1320.3h-2.243ZM506.07 1297.84h2.243V1320.3h-2.243ZM508.31 1297.84h2.243V1320.3h-2.243ZM510.56 1286.61h2.243V1320.3h-2.243ZM512.80 1286.61h2.243V1320.3h-2.243ZM515.04 1286.61h2.243V1320.3h-2.243ZM517.29 1286.61h2.243V1320.3h-2.243ZM519.53 1297.84h2.243V1320.3h-2.243ZM521.77 1297.84h2.243V1320.3h-2.243ZM524.02 1303.46h2.243V1320.3h-2.243ZM526.26 1303.46h2.243V1320.3h-2.243ZM528.50 1292.23h2.243V1320.3h-2.243ZM530.75 1292.23h2.243V1320.3h-2.243ZM532.99 1292.23h2.243V1320.3h-2.243ZM535.23 1292.23h2.243V1320.3h-2.243ZM537.47 1292.23h2.243V1320.3h-2.243ZM539.72 1297.84h2.243V1320.3h-2.243ZM541.96 1292.23h2.243V1320.3h-2.243ZM544.20 1292.23h2.243V1320.3h-2.243ZM546.45 1292.23h2.243V1320.3h-2.243ZM548.69 1292.23h2.243V1320.3h-2.243ZM550.93 1292.23h2.243V1320.3h-2.243ZM553.18 1292.23h2.243V1320.3h-2.243ZM555.42 1292.23h2.243V1320.3h-2.243ZM557.66 1292.23h2.243V1320.3h-2.243ZM707.96 1202.40h2.243V1320.3h-2.243ZM710.21 1230.47h2.243V1320.3h-2.243ZM712.45 1269.77h2.243V1320.3h-2.243ZM714.69 1292.23h2.243V1320.3h-2.243ZM716.94 1269.77h2.243V1320.3h-2.243ZM719.18 1264.16h2.243V1320.3h-2.243ZM721.42 1281.00h2.243V1320.3h-2.243ZM723.66 1286.61h2.243V1320.3h-2.243ZM725.91 1281.00h2.243V1320.3h-2.243ZM728.15 1281.00h2.243V1320.3h-2.243ZM730.39 1286.61h2.243V1320.3h-2.243ZM732.64 1281.00h2.243V1320.3h-2.243ZM734.88 1275.38h2.243V1320.3h-2.243ZM737.12 1275.38h2.243V1320.3h-2.243ZM739.37 1275.38h2.243V1320.3h-2.243ZM741.61 1275.38h2.243V1320.3h-2.243ZM743.85 1286.61h2.243V1320.3h-2.243ZM746.10 1286.61h2.243V1320.3h-2.243ZM748.34 1286.61h2.243V1320.3h-2.243ZM750.58 1281.00h2.243V1320.3h-2.243ZM752.83 1275.38h2.243V1320.3h-2.243ZM755.07 1292.23h2.243V1320.3h-2.243ZM757.31 1309.07h2.243V1320.3h-2.243ZM759.56 1303.46h2.243V1320.3h-2.243ZM761.80 1303.46h2.243V1320.3h-2.243ZM764.04 1309.07h2.243V1320.3h-2.243ZM766.29 1303.46h2.243V1320.3h-2.243ZM768.53 1309.07h2.243V1320.3h-2.243ZM770.77 1303.46h2.243V1320.3h-2.243ZM773.02 1309.07h2.243V1320.3h-2.243ZM775.26 1309.07h2.243V1320.3h-2.243ZM777.50 1309.07h2.243V1320.3h-2.243ZM779.75 1309.07h2.243V1320.3h-2.243ZM781.99 1303.46h2.243V1320.3h-2.243ZM784.23 1303.46h2.243V1320.3h-2.243ZM786.48 1297.84h2.243V1320.3h-2.243ZM788.72 1303.46h2.243V1320.3h-2.243ZM790.96 1303.46h2.243V1320.3h-2.243ZM793.21 1297.84h2.243V1320.3h-2.243ZM795.45 1297.84h2.243V1320.3h-2.243ZM797.69 1297.84h2.243V1320.3h-2.243ZM799.94 1303.46h2.243V1320.3h-2.243ZM802.18 1297.84h2.243V1320.3h-2.243ZM804.42 1297.84h2.243V1320.3h-2.243ZM806.67 1297.84h2.243V1320.3h-2.243ZM808.91 1297.84h2.243V1320.3h-2.243ZM811.15 1303.46h2.243V1320.3h-2.243ZM813.40 1303.46h2.243V1320.3h-2.243ZM815.64 1297.84h2.243V1320.3h-2.243ZM817.88 1297.84h2.243V1320.3h-2.243ZM820.12 1297.84h2.243V1320.3h-2.243ZM822.37 1303.46h2.243V1320.3h-2.243ZM824.61 1303.46h2.243V1320.3h-2.243ZM826.85 1292.23h2.243V1320.3h-2.243ZM829.10 1292.23h2.243V1320.3h-2.243ZM831.34 1297.84h2.243V1320.3h-2.243ZM833.58 1292.23h2.243V1320.3h-2.243ZM835.83 1297.84h2.243V1320.3h-2.243ZM838.07 1292.23h2.243V1320.3h-2.243ZM840.31 1292.23h2.243V1320.3h-2.243ZM842.56 1292.23h2.243V1320.3h-2.243ZM844.80 1292.23h2.243V1320.3h-2.243ZM847.04 1292.23h2.243V1320.3h-2.243ZM849.29 1292.23h2.243V1320.3h-2.243ZM851.53 1297.84h2.243V1320.3h-2.243ZM853.77 1286.61h2.243V1320.3h-2.243ZM856.02 1286.61h2.243V1320.3h-2.243ZM858.26 1286.61h2.243V1320.3h-2.243ZM860.50 1286.61h2.243V1320.3h-2.243ZM862.75 1286.61h2.243V1320.3h-2.243ZM864.99 1286.61h2.243V1320.3h-2.243ZM867.23 1286.61h2.243V1320.3h-2.243ZM869.48 1286.61h2.243V1320.3h-2.243ZM871.72 1286.61h2.243V1320.3h-2.243ZM873.96 1281.00h2.243V1320.3h-2.243ZM876.21 1281.00h2.243V1320.3h-2.243ZM878.45 1281.00h2.243V1320.3h-2.243ZM880.69 1281.00h2.243V1320.3h-2.243ZM1030.99 1185.55h2.243V1320.3h-2.243ZM1033.23 1241.70h2.243V1320.3h-2.243ZM1035.48 1258.54h2.243V1320.3h-2.243ZM1037.72 1269.77h2.243V1320.3h-2.243ZM1039.96 1269.77h2.243V1320.3h-2.243ZM1042.21 1269.77h2.243V1320.3h-2.243ZM1044.45 1269.77h2.243V1320.3h-2.243ZM1046.69 1269.77h2.243V1320.3h-2.243ZM1048.94 1269.77h2.243V1320.3h-2.243ZM1051.18 1269.77h2.243V1320.3h-2.243ZM1053.42 1269.77h2.243V1320.3h-2.243ZM1055.67 1269.77h2.243V1320.3h-2.243ZM1057.91 1269.77h2.243V1320.3h-2.243ZM1060.15 1269.77h2.243V1320.3h-2.243ZM1062.40 1269.77h2.243V1320.3h-2.243ZM1064.64 1269.77h2.243V1320.3h-2.243ZM1066.88 1281.00h2.243V1320.3h-2.243ZM1069.13 1281.00h2.243V1320.3h-2.243ZM1071.37 1286.61h2.243V1320.3h-2.243ZM1073.61 1281.00h2.243V1320.3h-2.243ZM1075.86 1281.00h2.243V1320.3h-2.243ZM1078.10 1281.00h2.243V1320.3h-2.243ZM1080.34 1281.00h2.243V1320.3h-2.243ZM1082.59 1303.46h2.243V1320.3h-2.243ZM1084.83 1297.84h2.243V1320.3h-2.243ZM1087.07 1297.84h2.243V1320.3h-2.243ZM1089.32 1303.46h2.243V1320.3h-2.243ZM1091.56 1309.07h2.243V1320.3h-2.243ZM1093.80 1309.07h2.243V1320.3h-2.243ZM1096.05 1297.84h2.243V1320.3h-2.243ZM1098.29 1297.84h2.243V1320.3h-2.243ZM1100.53 1297.84h2.243V1320.3h-2.243ZM1102.77 1303.46h2.243V1320.3h-2.243ZM1105.02 1303.46h2.243V1320.3h-2.243ZM1107.26 1303.46h2.243V1320.3h-2.243ZM1109.50 1303.46h2.243V1320.3h-2.243ZM1111.75 1303.46h2.243V1320.3h-2.243ZM1113.99 1303.46h2.243V1320.3h-2.243ZM1116.23 1303.46h2.243V1320.3h-2.243ZM1118.48 1303.46h2.243V1320.3h-2.243ZM1120.72 1303.46h2.243V1320.3h-2.243ZM1122.96 1303.46h2.243V1320.3h-2.243ZM1125.21 1297.84h2.243V1320.3h-2.243ZM1127.45 1297.84h2.243V1320.3h-2.243ZM1129.69 1297.84h2.243V1320.3h-2.243ZM1131.94 1297.84h2.243V1320.3h-2.243ZM1134.18 1297.84h2.243V1320.3h-2.243ZM1136.42 1297.84h2.243V1320.3h-2.243ZM1138.67 1297.84h2.243V1320.3h-2.243ZM1140.91 1292.23h2.243V1320.3h-2.243ZM1143.15 1292.23h2.243V1320.3h-2.243ZM1145.40 1297.84h2.243V1320.3h-2.243ZM1147.64 1297.84h2.243V1320.3h-2.243ZM1149.88 1297.84h2.243V1320.3h-2.243ZM1152.13 1303.46h2.243V1320.3h-2.243ZM1154.37 1297.84h2.243V1320.3h-2.243ZM1156.61 1297.84h2.243V1320.3h-2.243ZM1158.86 1297.84h2.243V1320.3h-2.243ZM1161.10 1297.84h2.243V1320.3h-2.243ZM1163.34 1297.84h2.243V1320.3h-2.243ZM1165.59 1297.84h2.243V1320.3h-2.243ZM1167.83 1297.84h2.243V1320.3h-2.243ZM1170.07 1297.84h2.243V1320.3h-2.243ZM1172.32 1303.46h2.243V1320.3h-2.243ZM1174.56 1303.46h2.243V1320.3h-2.243ZM1176.80 1303.46h2.243V1320.3h-2.243ZM1179.05 1297.84h2.243V1320.3h-2.243ZM1181.29 1292.23h2.243V1320.3h-2.243ZM1183.53 1303.46h2.243V1320.3h-2.243ZM1185.78 1297.84h2.243V1320.3h-2.243ZM1188.02 1297.84h2.243V1320.3h-2.243ZM1190.26 1292.23h2.243V1320.3h-2.243ZM1192.50 1297.84h2.243V1320.3h-2.243ZM1194.75 1297.84h2.243V1320.3h-2.243ZM1196.99 1297.84h2.243V1320.3h-2.243ZM1199.23 1297.84h2.243V1320.3h-2.243ZM1201.48 1297.84h2.243V1320.3h-2.243ZM1203.72 1292.23h2.243V1320.3h-2.243ZM1354.02 1179.94h2.243V1320.3h-2.243ZM1356.26 1202.40h2.243V1320.3h-2.243ZM1358.51 1202.40h2.243V1320.3h-2.243ZM1360.75 1230.47h2.243V1320.3h-2.243ZM1362.99 1230.47h2.243V1320.3h-2.243ZM1365.24 1241.70h2.243V1320.3h-2.243ZM1367.48 1241.70h2.243V1320.3h-2.243ZM1369.72 1241.70h2.243V1320.3h-2.243ZM1371.97 1241.70h2.243V1320.3h-2.243ZM1374.21 1241.70h2.243V1320.3h-2.243ZM1376.45 1241.70h2.243V1320.3h-2.243ZM1378.70 1241.70h2.243V1320.3h-2.243ZM1380.94 1252.93h2.243V1320.3h-2.243ZM1383.18 1258.54h2.243V1320.3h-2.243ZM1385.42 1258.54h2.243V1320.3h-2.243ZM1387.67 1281.00h2.243V1320.3h-2.243ZM1389.91 1286.61h2.243V1320.3h-2.243ZM1392.15 1286.61h2.243V1320.3h-2.243ZM1394.40 1286.61h2.243V1320.3h-2.243ZM1396.64 1303.46h2.243V1320.3h-2.243ZM1398.88 1303.46h2.243V1320.3h-2.243ZM1401.13 1303.46h2.243V1320.3h-2.243ZM1403.37 1303.46h2.243V1320.3h-2.243ZM1405.61 1303.46h2.243V1320.3h-2.243ZM1407.86 1303.46h2.243V1320.3h-2.243ZM1410.10 1303.46h2.243V1320.3h-2.243ZM1412.34 1303.46h2.243V1320.3h-2.243ZM1414.59 1303.46h2.243V1320.3h-2.243ZM1416.83 1309.07h2.243V1320.3h-2.243ZM1419.07 1303.46h2.243V1320.3h-2.243ZM1421.32 1303.46h2.243V1320.3h-2.243ZM1423.56 1303.46h2.243V1320.3h-2.243ZM1425.80 1292.23h2.243V1320.3h-2.243ZM1428.05 1292.23h2.243V1320.3h-2.243ZM1430.29 1292.23h2.243V1320.3h-2.243ZM1432.53 1292.23h2.243V1320.3h-2.243ZM1434.78 1303.46h2.243V1320.3h-2.243ZM1437.02 1303.46h2.243V1320.3h-2.243ZM1439.26 1303.46h2.243V1320.3h-2.243ZM1441.51 1309.07h2.243V1320.3h-2.243ZM1443.75 1303.46h2.243V1320.3h-2.243ZM1445.99 1303.46h2.243V1320.3h-2.243ZM1448.24 1309.07h2.243V1320.3h-2.243ZM1450.48 1303.46h2.243V1320.3h-2.243ZM1452.72 1309.07h2.243V1320.3h-2.243ZM1454.97 1303.46h2.243V1320.3h-2.243ZM1457.21 1303.46h2.243V1320.3h-2.243ZM1459.45 1303.46h2.243V1320.3h-2.243ZM1461.70 1303.46h2.243V1320.3h-2.243ZM1463.94 1297.84h2.243V1320.3h-2.243ZM1466.18 1303.46h2.243V1320.3h-2.243ZM1468.43 1303.46h2.243V1320.3h-2.243ZM1470.67 1309.07h2.243V1320.3h-2.243ZM1472.91 1303.46h2.243V1320.3h-2.243ZM1475.15 1303.46h2.243V1320.3h-2.243ZM1477.40 1303.46h2.243V1320.3h-2.243ZM1479.64 1303.46h2.243V1320.3h-2.243ZM1481.88 1303.46h2.243V1320.3h-2.243ZM1484.13 1303.46h2.243V1320.3h-2.243ZM1486.37 1303.46h2.243V1320.3h-2.243ZM1488.61 1303.46h2.243V1320.3h-2.243ZM1490.86 1297.84h2.243V1320.3h-2.243ZM1493.10 1303.46h2.243V1320.3h-2.243ZM1495.34 1303.46h2.243V1320.3h-2.243ZM1497.59 1303.46h2.243V1320.3h-2.243ZM1499.83 1303.46h2.243V1320.3h-2.243ZM1502.07 1297.84h2.243V1320.3h-2.243ZM1504.32 1303.46h2.243V1320.3h-2.243ZM1506.56 1303.46h2.243V1320.3h-2.243ZM1508.80 1303.46h2.243V1320.3h-2.243ZM1511.05 1303.46h2.243V1320.3h-2.243ZM1513.29 1297.84h2.243V1320.3h-2.243ZM1515.53 1303.46h2.243V1320.3h-2.243ZM1517.78 1303.46h2.243V1320.3h-2.243ZM1520.02 1303.46h2.243V1320.3h-2.243ZM1522.26 1297.84h2.243V1320.3h-2.243ZM1524.51 1303.46h2.243V1320.3h-2.243ZM1526.75 1168.71h2.243V1320.3h-2.243ZM1677.05 1292.23h2.243V1320.3h-2.243ZM1679.29 1292.23h2.243V1320.3h-2.243ZM1681.53 1281.00h2.243V1320.3h-2.243ZM1683.78 1281.00h2.243V1320.3h-2.243ZM1686.02 1281.00h2.243V1320.3h-2.243ZM1688.26 1281.00h2.243V1320.3h-2.243ZM1690.51 1281.00h2.243V1320.3h-2.243ZM1692.75 1281.00h2.243V1320.3h-2.243ZM1694.99 1281.00h2.243V1320.3h-2.243ZM1697.24 1281.00h2.243V1320.3h-2.243ZM1699.48 1281.00h2.243V1320.3h-2.243ZM1701.72 1286.61h2.243V1320.3h-2.243ZM1703.97 1292.23h2.243V1320.3h-2.243ZM1706.21 1309.07h2.243V1320.3h-2.243ZM1708.45 1314.69h2.243V1320.3h-2.243ZM1710.70 1314.69h2.243V1320.3h-2.243ZM1712.94 1309.07h2.243V1320.3h-2.243ZM1715.18 1309.07h2.243V1320.3h-2.243ZM1717.43 1314.69h2.243V1320.3h-2.243ZM1719.67 1303.46h2.243V1320.3h-2.243ZM1721.91 1303.46h2.243V1320.3h-2.243ZM1724.16 1309.07h2.243V1320.3h-2.243ZM1726.40 1303.46h2.243V1320.3h-2.243ZM1728.64 1303.46h2.243V1320.3h-2.243ZM1730.89 1303.46h2.243V1320.3h-2.243ZM1733.13 1303.46h2.243V1320.3h-2.243ZM1735.37 1303.46h2.243V1320.3h-2.243ZM1737.62 1297.84h2.243V1320.3h-2.243ZM1739.86 1303.46h2.243V1320.3h-2.243ZM1742.10 1303.46h2.243V1320.3h-2.243ZM1744.35 1309.07h2.243V1320.3h-2.243ZM1746.59 1303.46h2.243V1320.3h-2.243ZM1748.83 1303.46h2.243V1320.3h-2.243ZM1751.08 1303.46h2.243V1320.3h-2.243ZM1753.32 1303.46h2.243V1320.3h-2.243ZM1755.56 1303.46h2.243V1320.3h-2.243ZM1757.80 1292.23h2.243V1320.3h-2.243ZM1760.05 1297.84h2.243V1320.3h-2.243ZM1762.29 1292.23h2.243V1320.3h-2.243ZM1764.53 1292.23h2.243V1320.3h-2.243ZM1766.78 1309.07h2.243V1320.3h-2.243ZM1769.02 1303.46h2.243V1320.3h-2.243ZM1771.26 1303.46h2.243V1320.3h-2.243ZM1773.51 1303.46h2.243V1320.3h-2.243ZM1775.75 1309.07h2.243V1320.3h-2.243ZM1777.99 1303.46h2.243V1320.3h-2.243ZM1780.24 1303.46h2.243V1320.3h-2.243ZM1782.48 1303.46h2.243V1320.3h-2.243ZM1784.72 1309.07h2.243V1320.3h-2.243ZM1786.97 1303.46h2.243V1320.3h-2.243ZM1789.21 1309.07h2.243V1320.3h-2.243ZM1791.45 1297.84h2.243V1320.3h-2.243ZM1793.70 1303.46h2.243V1320.3h-2.243ZM1795.94 1309.07h2.243V1320.3h-2.243ZM1798.18 1303.46h2.243V1320.3h-2.243ZM1800.43 1303.46h2.243V1320.3h-2.243ZM1802.67 1303.46h2.243V1320.3h-2.243ZM1804.91 1303.46h2.243V1320.3h-2.243ZM1807.16 1309.07h2.243V1320.3h-2.243ZM1809.40 1303.46h2.243V1320.3h-2.243ZM1811.64 1303.46h2.243V1320.3h-2.243ZM1813.89 1303.46h2.243V1320.3h-2.243ZM1816.13 1309.07h2.243V1320.3h-2.243ZM1818.37 1309.07h2.243V1320.3h-2.243ZM1820.62 1303.46h2.243V1320.3h-2.243ZM1822.86 1303.46h2.243V1320.3h-2.243ZM1825.10 1309.07h2.243V1320.3h-2.243ZM1827.35 1303.46h2.243V1320.3h-2.243ZM1829.59 1303.46h2.243V1320.3h-2.243ZM1831.83 1303.46h2.243V1320.3h-2.243ZM1834.08 1309.07h2.243V1320.3h-2.243ZM1836.32 1303.46h2.243V1320.3h-2.243ZM1838.56 1309.07h2.243V1320.3h-2.243ZM1840.81 1303.46h2.243V1320.3h-2.243ZM1843.05 1303.46h2.243V1320.3h-2.243ZM1845.29 1297.84h2.243V1320.3h-2.243ZM1847.54 1303.46h2.243V1320.3h-2.243ZM1849.78 1303.46h2.243V1320.3h-2.243ZM1852.02 1303.46h2.243V1320.3h-2.243ZM1854.26 1309.07h2.243V1320.3h-2.243ZM1856.51 1297.84h2.243V1320.3h-2.243ZM1858.75 1303.46h2.243V1320.3h-2.243ZM1860.99 1309.07h2.243V1320.3h-2.243ZM1863.24 1309.07h2.243V1320.3h-2.243ZM1865.48 1309.07h2.243V1320.3h-2.243ZM1867.72 1309.07h2.243V1320.3h-2.243ZM1869.97 1309.07h2.243V1320.3h-2.243ZM1872.21 1309.07h2.243V1320.3h-2.243ZM1874.45 1309.07h2.243V1320.3h-2.243ZM1876.70 1309.07h2.243V1320.3h-2.243ZM1878.94 1309.07h2.243V1320.3h-2.243ZM1881.18 1314.69h2.243V1320.3h-2.243ZM1883.43 1309.07h2.243V1320.3h-2.243ZM1885.67 1314.69h2.243V1320.3h-2.243ZM1887.91 1309.07h2.243V1320.3h-2.243ZM1890.16 1314.69h2.243V1320.3h-2.243ZM1892.40 1309.07h2.243V1320.3h-2.243ZM1894.64 1309.07h2.243V1320.3h-2.243ZM1896.89 1309.07h2.243V1320.3h-2.243ZM1899.13 1309.07h2.243V1320.3h-2.243ZM1901.37 1309.07h2.243V1320.3h-2.243ZM1903.62 1314.69h2.243V1320.3h-2.243ZM1905.86 1309.07h2.243V1320.3h-2.243ZM1908.10 1309.07h2.243V1320.3h-2.243ZM1910.35 1309.07h2.243V1320.3h-2.243ZM1912.59 1309.07h2.243V1320.3h-2.243ZM1914.83 1309.07h2.243V1320.3h-2.243ZM1917.08 1309.07h2.243V1320.3h-2.243ZM1919.32 1309.07h2.243V1320.3h-2.243ZM1921.56 1303.46h2.243V1320.3h-2.243ZM1923.81 1297.84h2.243V1320.3h-2.243ZM1926.05 1303.46h2.243V1320.3h-2.243ZM1928.29 1309.07h2.243V1320.3h-2.243ZM1930.54 1309.07h2.243V1320.3h-2.243ZM1932.78 1309.07h2.243V1320.3h-2.243ZM1935.02 1309.07h2.243V1320.3h-2.243ZM1937.27 1314.69h2.243V1320.3h-2.243ZM1939.51 1314.69h2.243V1320.3h-2.243ZM1941.75 1314.69h2.243V1320.3h-2.243ZM1944.00 1309.07h2.243V1320.3h-2.243ZM1946.24 1309.07h2.243V1320.3h-2.243ZM1948.48 1314.69h2.243V1320.3h-2.243ZM1950.72 1314.69h2.243V1320.3h-2.243ZM1952.97 1309.07h2.243V1320.3h-2.243ZM1955.21 1309.07h2.243V1320.3h-2.243ZM1957.45 1309.07h2.243V1320.3h-2.243ZM1959.70 1309.07h2.243V1320.3h-2.243ZM1961.94 1309.07h2.243V1320.3h-2.243ZM1964.18 1309.07h2.243V1320.3h-2.243ZM1966.43 1309.07h2.243V1320.3h-2.243ZM1968.67 1314.69h2.243V1320.3h-2.243ZM1970.91 1309.07h2.243V1320.3h-2.243ZM1973.16 1309.07h2.243V1320.3h-2.243ZM1975.40 1309.07h2.243V1320.3h-2.243ZM1977.64 1309.07h2.243V1320.3h-2.243ZM1979.89 1309.07h2.243V1320.3h-2.243ZM1982.13 1309.07h2.243V1320.3h-2.243ZM1984.37 1309.07h2.243V1320.3h-2.243ZM1986.62 1309.07h2.243V1320.3h-2.243ZM1988.86 1309.07h2.243V1320.3h-2.243ZM1991.10 1314.69h2.243V1320.3h-2.243ZM1993.35 1309.07h2.243V1320.3h-2.243ZM1995.59 1309.07h2.243V1320.3h-2.243ZM1997.83 1309.07h2.243V1320.3h-2.243ZM2000.08 1309.07h2.243V1320.3h-2.243ZM2002.32 1309.07h2.243V1320.3h-2.243ZM2004.56 1314.69h2.243V1320.3h-2.243ZM2006.81 1309.07h2.243V1320.3h-2.243ZM2009.05 1314.69h2.243V1320.3h-2.243ZM2011.29 1309.07h2.243V1320.3h-2.243ZM2013.54 1314.69h2.243V1320.3h-2.243ZM2015.78 1314.69h2.243V1320.3h-2.243ZM2018.02 1309.07h2.243V1320.3h-2.243ZM2020.27 1309.07h2.243V1320.3h-2.243ZM2022.51 1309.07h2.243V1320.3h-2.243ZM2024.75 1309.07h2.243V1320.3h-2.243ZM2027.00 1309.07h2.243V1320.3h-2.243ZM2029.24 1309.07h2.243V1320.3h-2.243ZM2031.48 1309.07h2.243V1320.3h-2.243ZM2033.73 1309.07h2.243V1320.3h-2.243ZM2035.97 1309.07h2.243V1320.3h-2.243ZM2038.21 1309.07h2.243V1320.3h-2.243ZM2040.45 1303.46h2.243V1320.3h-2.243ZM2042.70 1309.07h2.243V1320.3h-2.243ZM2044.94 1303.46h2.243V1320.3h-2.243ZM2047.18 1303.46h2.243V1320.3h-2.243ZM2049.43 1309.07h2.243V1320.3h-2.243ZM2051.67 1303.46h2.243V1320.3h-2.243ZM2053.91 1303.46h2.243V1320.3h-2.243ZM2056.16 1303.46h2.243V1320.3h-2.243ZM2058.40 1303.46h2.243V1320.3h-2.243ZM2060.64 1303.46h2.243V1320.3h-2.243ZM2062.89 1309.07h2.243V1320.3h-2.243ZM2065.13 1297.84h2.243V1320.3h-2.243ZM2067.37 1303.46h2.243V1320.3h-2.243ZM2069.62 1303.46h2.243V1320.3h-2.243ZM2071.86 1303.46h2.243V1320.3h-2.243ZM2074.10 1303.46h2.243V1320.3h-2.243ZM2076.35 1303.46h2.243V1320.3h-2.243ZM2078.59 1303.46h2.243V1320.3h-2.243ZM2080.83 1303.46h2.243V1320.3h-2.243ZM2083.08 1292.23h2.243V1320.3h-2.243ZM2085.32 1292.23h2.243V1320.3h-2.243ZM2087.56 1297.84h2.243V1320.3h-2.243ZM2089.81 1297.84h2.243V1320.3h-2.243ZM2092.05 1303.46h2.243V1320.3h-2.243ZM2094.29 1309.07h2.243V1320.3h-2.243ZM2096.54 1303.46h2.243V1320.3h-2.243ZM2098.78 1303.46h2.243V1320.3h-2.243ZM2101.02 1303.46h2.243V1320.3h-2.243ZM2103.27 1303.46h2.243V1320.3h-2.243ZM2105.51 1303.46h2.243V1320.3h-2.243ZM2107.75 1303.46h2.243V1320.3h-2.243ZM2110.00 1309.07h2.243V1320.3h-2.243ZM2112.24 1297.84h2.243V1320.3h-2.243ZM2114.48 1303.46h2.243V1320.3h-2.243ZM2116.73 1303.46h2.243V1320.3h-2.243ZM2118.97 1303.46h2.243V1320.3h-2.243ZM2121.21 1303.46h2.243V1320.3h-2.243ZM2123.46 1309.07h2.243V1320.3h-2.243ZM2125.70 1303.46h2.243V1320.3h-2.243ZM2127.94 1303.46h2.243V1320.3h-2.243ZM2130.19 1309.07h2.243V1320.3h-2.243ZM2132.43 1303.46h2.243V1320.3h-2.243ZM2134.67 1303.46h2.243V1320.3h-2.243ZM2136.91 1303.46h2.243V1320.3h-2.243ZM2139.16 1303.46h2.243V1320.3h-2.243ZM2141.40 1297.84h2.243V1320.3h-2.243ZM2143.64 1303.46h2.243V1320.3h-2.243ZM2145.89 1303.46h2.243V1320.3h-2.243ZM2148.13 1303.46h2.243V1320.3h-2.243ZM2150.37 1297.84h2.243V1320.3h-2.243ZM2152.62 1303.46h2.243V1320.3h-2.243ZM2154.86 1303.46h2.243V1320.3h-2.243ZM2157.10 1303.46h2.243V1320.3h-2.243ZM2159.35 1303.46h2.243V1320.3h-2.243ZM2161.59 1309.07h2.243V1320.3h-2.243ZM2163.83 1303.46h2.243V1320.3h-2.243ZM2166.08 1303.46h2.243V1320.3h-2.243ZM2168.32 1303.46h2.243V1320.3h-2.243ZM2170.56 1303.46h2.243V1320.3h-2.243ZM2172.81 1309.07h2.243V1320.3h-2.243ZM2175.05 1309.07h2.243V1320.3h-2.243ZM2177.29 1297.84h2.243V1320.3h-2.243ZM2179.54 1303.46h2.243V1320.3h-2.243ZM2181.78 1303.46h2.243V1320.3h-2.243ZM2184.02 1303.46h2.243V1320.3h-2.243ZM2186.27 1303.46h2.243V1320.3h-2.243ZM2188.51 1303.46h2.243V1320.3h-2.243ZM2190.75 1303.46h2.243V1320.3h-2.243ZM2193.00 1303.46h2.243V1320.3h-2.243ZM2195.24 1309.07h2.243V1320.3h-2.243ZM2197.48 1309.07h2.243V1320.3h-2.243ZM2199.73 1309.07h2.243V1320.3h-2.243ZM2201.97 1309.07h2.243V1320.3h-2.243ZM2204.21 1309.07h2.243V1320.3h-2.243ZM2206.46 1314.69h2.243V1320.3h-2.243ZM2208.70 1309.07h2.243V1320.3h-2.243ZM2210.94 1309.07h2.243V1320.3h-2.243ZM2213.19 1309.07h2.243V1320.3h-2.243ZM2215.43 1309.07h2.243V1320.3h-2.243ZM2217.67 1309.07h2.243V1320.3h-2.243ZM2219.92 1309.07h2.243V1320.3h-2.243ZM2222.16 1309.07h2.243V1320.3h-2.243ZM2224.40 1309.07h2.243V1320.3h-2.243ZM2226.65 1309.07h2.243V1320.3h-2.243ZM2228.89 1314.69h2.243V1320.3h-2.243ZM2231.13 1309.07h2.243V1320.3h-2.243ZM2233.37 1309.07h2.243V1320.3h-2.243ZM2235.62 1314.69h2.243V1320.3h-2.243ZM2237.86 1309.07h2.243V1320.3h-2.243ZM2240.10 1303.46h2.243V1320.3h-2.243ZM2242.35 1303.46h2.243V1320.3h-2.243ZM2244.59 1303.46h2.243V1320.3h-2.243ZM2246.83 1303.46h2.243V1320.3h-2.243ZM2249.08 1309.07h2.243V1320.3h-2.243ZM2251.32 1309.07h2.243V1320.3h-2.243ZM2253.56 1314.69h2.243V1320.3h-2.243ZM2255.81 1314.69h2.243V1320.3h-2.243ZM2258.05 1309.07h2.243V1320.3h-2.243ZM2260.29 1309.07h2.243V1320.3h-2.243ZM2262.54 1309.07h2.243V1320.3h-2.243ZM2264.78 1314.69h2.243V1320.3h-2.243ZM2267.02 1309.07h2.243V1320.3h-2.243ZM2269.27 1309.07h2.243V1320.3h-2.243ZM2271.51 1309.07h2.243V1320.3h-2.243ZM2273.75 1314.69h2.243V1320.3h-2.243ZM2276.00 1309.07h2.243V1320.3h-2.243ZM2278.24 1309.07h2.243V1320.3h-2.243ZM2280.48 1314.69h2.243V1320.3h-2.243ZM2282.73 1309.07h2.243V1320.3h-2.243ZM2284.97 1309.07h2.243V1320.3h-2.243ZM2287.21 1309.07h2.243V1320.3h-2.243ZM2289.46 1309.07h2.243V1320.3h-2.243ZM2291.70 1309.07h2.243V1320.3h-2.243ZM2293.94 1309.07h2.243V1320.3h-2.243ZM2296.19 1309.07h2.243V1320.3h-2.243ZM2298.43 1309.07h2.243V1320.3h-2.243ZM2300.67 1309.07h2.243V1320.3h-2.243ZM2302.92 1309.07h2.243V1320.3h-2.243ZM2305.16 1309.07h2.243V1320.3h-2.243ZM2307.40 1314.69h2.243V1320.3h-2.243ZM2309.65 1314.69h2.243V1320.3h-2.243ZM2311.89 1309.07h2.243V1320.3h-2.243ZM2314.13 1309.07h2.243V1320.3h-2.243ZM2316.38 1309.07h2.243V1320.3h-2.243ZM2318.62 1309.07h2.243V1320.3h-2.243ZM2320.86 1309.07h2.243V1320.3h-2.243ZM2323.10 1309.07h2.243V1320.3h-2.243ZM2325.35 1309.07h2.243V1320.3h-2.243ZM2327.59 1309.07h2.243V1320.3h-2.243ZM2329.83 1309.07h2.243V1320.3h-2.243ZM2332.08 1309.07h2.243V1320.3h-2.243ZM2334.32 1309.07h2.243V1320.3h-2.243ZM2336.56 1309.07h2.243V1320.3h-2.243ZM2338.81 1309.07h2.243V1320.3h-2.243ZM2341.05 1309.07h2.243V1320.3h-2.243ZM2343.29 1309.07h2.243V1320.3h-2.243ZM2345.54 1309.07h2.243V1320.3h-2.243ZM2347.78 1314.69h2.243V1320.3h-2.243ZM2350.02 1309.07h2.243V1320.3h-2.243ZM2352.27 1309.07h2.243V1320.3h-2.243ZM2354.51 1309.07h2.243V1320.3h-2.243ZM2356.75 1309.07h2.243V1320.3h-2.243ZM2359.00 1303.46h2.243V1320.3h-2.243ZM2361.24 1309.07h2.243V1320.3h-2.243ZM2363.48 1303.46h2.243V1320.3h-2.243ZM2365.73 1309.07h2.243V1320.3h-2.243ZM2367.97 1303.46h2.243V1320.3h-2.243ZM2370.21 1303.46h2.243V1320.3h-2.243ZM2372.46 1303.46h2.243V1320.3h-2.243ZM2374.70 1303.46h2.243V1320.3h-2.243ZM2376.94 1297.84h2.243V1320.3h-2.243ZM2379.19 1303.46h2.243V1320.3h-2.243ZM2381.43 1297.84h2.243V1320.3h-2.243ZM2383.67 1303.46h2.243V1320.3h-2.243ZM2385.92 1303.46h2.243V1320.3h-2.243ZM2388.16 1303.46h2.243V1320.3h-2.243ZM2390.40 1309.07h2.243V1320.3h-2.243ZM2392.65 1309.07h2.243V1320.3h-2.243ZM2394.89 1292.23h2.243V1320.3h-2.243ZM2397.13 1292.23h2.243V1320.3h-2.243ZM2399.38 1292.23h2.243V1320.3h-2.243ZM2401.62 1292.23h2.243V1320.3h-2.243ZM2403.86 1303.46h2.243V1320.3h-2.243ZM2406.11 1303.46h2.243V1320.3h-2.243ZM2408.35 1303.46h2.243V1320.3h-2.243ZM2410.59 1309.07h2.243V1320.3h-2.243ZM2412.84 1297.84h2.243V1320.3h-2.243Z" fill="#a0ebc4"/>
<path d="M236.88 1286.61h2.243V1320.3h-2.243ZM239.12 1292.23h2.243V1320.3h-2.243ZM241.37 1292.23h2.243V1320.3h-2.243ZM243.61 1292.23h2.243V1320.3h-2.243ZM245.85 1286.61h2.243V1320.3h-2.243ZM248.10 1292.23h2.243V1320.3h-2.243ZM250.34 1292.23h2.243V1320.3h-2.243ZM252.58 1292.23h2.243V1320.3h-2.243ZM254.82 1292.23h2.243V1320.3h-2.243ZM257.07 1297.84h2.243V1320.3h-2.243ZM259.31 1297.84h2.243V1320.3h-2.243ZM261.55 1297.84h2.243V1320.3h-2.243ZM263.80 1297.84h2.243V1320.3h-2.243ZM266.04 1292.23h2.243V1320.3h-2.243ZM268.28 1297.84h2.243V1320.3h-2.243ZM270.53 1297.84h2.243V1320.3h-2.243ZM272.77 1292.23h2.243V1320.3h-2.243ZM275.01 1297.84h2.243V1320.3h-2.243ZM277.26 1292.23h2.243V1320.3h-2.243ZM279.50 1297.84h2.243V1320.3h-2.243ZM281.74 1297.84h2.243V1320.3h-2.243ZM283.99 1297.84h2.243V1320.3h-2.243ZM286.23 1297.84h2.243V1320.3h-2.243ZM288.47 1297.84h2.243V1320.3h-2.243ZM290.72 1297.84h2.243V1320.3h-2.243ZM292.96 1297.84h2.243V1320.3h-2.243ZM295.20 1297.84h2.243V1320.3h-2.243ZM297.45 1297.84h2.243V1320.3h-2.243ZM299.69 1297.84h2.243V1320.3h-2.243ZM301.93 1297.84h2.243V1320.3h-2.243ZM304.18 1297.84h2.243V1320.3h-2.243ZM306.42 1297.84h2.243V1320.3h-2.243ZM308.66 1297.84h2.243V1320.3h-2.243ZM310.91 1297.84h2.243V1320.3h-2.243ZM313.15 1297.84h2.243V1320.3h-2.243ZM315.39 1297.84h2.243V1320.3h-2.243ZM317.64 1297.84h2.243V1320.3h-2.243ZM319.88 1303.46h2.243V1320.3h-2.243ZM322.12 1303.46h2.243V1320.3h-2.243ZM324.37 1297.84h2.243V1320.3h-2.243ZM326.61 1303.46h2.243V1320.3h-2.243ZM328.85 1303.46h2.243V1320.3h-2.243ZM331.10 1303.46h2.243V1320.3h-2.243ZM333.34 1303.46h2.243V1320.3h-2.243ZM335.58 1303.46h2.243V1320.3h-2.243ZM337.83 1303.46h2.243V1320.3h-2.243ZM340.07 1303.46h2.243V1320.3h-2.243ZM342.31 1297.84h2.243V1320.3h-2.243ZM344.55 1303.46h2.243V1320.3h-2.243ZM346.80 1303.46h2.243V1320.3h-2.243ZM349.04 1292.23h2.243V1320.3h-2.243ZM351.28 1292.23h2.243V1320.3h-2.243ZM353.53 1292.23h2.243V1320.3h-2.243ZM355.77 1297.84h2.243V1320.3h-2.243ZM358.01 1303.46h2.243V1320.3h-2.243ZM360.26 1303.46h2.243V1320.3h-2.243ZM362.50 1303.46h2.243V1320.3h-2.243ZM364.74 1303.46h2.243V1320.3h-2.243ZM366.99 1303.46h2.243V1320.3h-2.243ZM369.23 1303.46h2.243V1320.3h-2.243ZM371.47 1303.46h2.243V1320.3h-2.243ZM373.72 1303.46h2.243V1320.3h-2.243ZM375.96 1309.07h2.243V1320.3h-2.243ZM378.20 1309.07h2.243V1320.3h-2.243ZM380.45 1309.07h2.243V1320.3h-2.243ZM382.69 1309.07h2.243V1320.3h-2.243ZM559.91 1292.23h2.243V1320.3h-2.243ZM562.15 1292.23h2.243V1320.3h-2.243ZM564.39 1292.23h2.243V1320.3h-2.243ZM566.64 1146.25h2.243V1320.3h-2.243ZM568.88 1123.79h2.243V1320.3h-2.243ZM571.12 1163.10h2.243V1320.3h-2.243ZM573.37 944.13h2.243V1320.3h-2.243ZM575.61 1118.18h2.243V1320.3h-2.243ZM577.85 1174.32h2.243V1320.3h-2.243ZM580.10 1174.32h2.243V1320.3h-2.243ZM582.34 876.76h2.243V1320.3h-2.243ZM584.58 977.82h2.243V1320.3h-2.243ZM586.83 1135.02h2.243V1320.3h-2.243ZM589.07 1135.02h2.243V1320.3h-2.243ZM591.31 1196.78h2.243V1320.3h-2.243ZM593.56 1174.32h2.243V1320.3h-2.243ZM595.80 1062.04h2.243V1320.3h-2.243ZM598.04 1135.02h2.243V1320.3h-2.243ZM600.29 1168.71h2.243V1320.3h-2.243ZM602.53 848.69h2.243V1320.3h-2.243ZM604.77 1067.65h2.243V1320.3h-2.243ZM607.02 1179.94h2.243V1320.3h-2.243ZM609.26 1123.79h2.243V1320.3h-2.243ZM611.50 1202.40h2.243V1320.3h-2.243ZM613.75 1123.79h2.243V1320.3h-2.243ZM615.99 1196.78h2.243V1320.3h-2.243ZM618.23 1224.85h2.243V1320.3h-2.243ZM620.48 1163.10h2.243V1320.3h-2.243ZM622.72 989.05h2.243V1320.3h-2.243ZM624.96 972.20h2.243V1320.3h-2.243ZM627.20 966.59h2.243V1320.3h-2.243ZM629.45 972.20h2.243V1320.3h-2.243ZM631.69 1123.79h2.243V1320.3h-2.243ZM633.93 1123.79h2.243V1320.3h-2.243ZM636.18 1196.78h2.243V1320.3h-2.243ZM638.42 1196.78h2.243V1320.3h-2.243ZM640.66 1196.78h2.243V1320.3h-2.243ZM642.91 1157.48h2.243V1320.3h-2.243ZM645.15 944.13h2.243V1320.3h-2.243ZM647.39 1123.79h2.243V1320.3h-2.243ZM649.64 1179.94h2.243V1320.3h-2.243ZM651.88 1179.94h2.243V1320.3h-2.243ZM654.12 938.52h2.243V1320.3h-2.243ZM656.37 1050.81h2.243V1320.3h-2.243ZM658.61 1022.73h2.243V1320.3h-2.243ZM660.85 1230.47h2.243V1320.3h-2.243ZM663.10 1090.11h2.243V1320.3h-2.243ZM665.34 1213.63h2.243V1320.3h-2.243ZM667.58 1179.94h2.243V1320.3h-2.243ZM669.83 1011.51h2.243V1320.3h-2.243ZM672.07 955.36h2.243V1320.3h-2.243ZM674.31 1011.51h2.243V1320.3h-2.243ZM676.56 1033.96h2.243V1320.3h-2.243ZM678.80 1179.94h2.243V1320.3h-2.243ZM681.04 1230.47h2.243V1320.3h-2.243ZM683.29 1179.94h2.243V1320.3h-2.243ZM685.53 1179.94h2.243V1320.3h-2.243ZM687.77 1017.12h2.243V1320.3h-2.243ZM690.02 1017.12h2.243V1320.3h-2.243ZM692.26 1017.12h2.243V1320.3h-2.243ZM694.50 1157.48h2.243V1320.3h-2.243ZM696.75 1202.40h2.243V1320.3h-2.243ZM698.99 1208.01h2.243V1320.3h-2.243ZM701.23 1252.93h2.243V1320.3h-2.243ZM703.48 1179.94h2.243V1320.3h-2.243ZM705.72 1179.94h2.243V1320.3h-2.243ZM882.94 1281.00h2.243V1320.3h-2.243ZM885.18 1281.00h2.243V1320.3h-2.243ZM887.42 1281.00h2.243V1320.3h-2.243ZM889.67 1224.85h2.243V1320.3h-2.243ZM891.91 1208.01h2.243V1320.3h-2.243ZM894.15 1196.78h2.243V1320.3h-2.243ZM896.40 989.05h2.243V1320.3h-2.243ZM898.64 949.75h2.243V1320.3h-2.243ZM900.88 1101.34h2.243V1320.3h-2.243ZM903.13 989.05h2.243V1320.3h-2.243ZM905.37 1078.88h2.243V1320.3h-2.243ZM907.61 876.76h2.243V1320.3h-2.243ZM909.85 1106.95h2.243V1320.3h-2.243ZM912.10 1123.79h2.243V1320.3h-2.243ZM914.34 1196.78h2.243V1320.3h-2.243ZM916.58 1202.40h2.243V1320.3h-2.243ZM918.83 1050.81h2.243V1320.3h-2.243ZM921.07 927.29h2.243V1320.3h-2.243ZM923.31 1005.89h2.243V1320.3h-2.243ZM925.56 966.59h2.243V1320.3h-2.243ZM927.80 1084.49h2.243V1320.3h-2.243ZM930.04 927.29h2.243V1320.3h-2.243ZM932.29 1185.55h2.243V1320.3h-2.243ZM934.53 1202.40h2.243V1320.3h-2.243ZM936.77 1045.19h2.243V1320.3h-2.243ZM939.02 1078.88h2.243V1320.3h-2.243ZM941.26 1208.01h2.243V1320.3h-2.243ZM943.50 1118.18h2.243V1320.3h-2.243ZM945.75 1011.51h2.243V1320.3h-2.243ZM947.99 949.75h2.243V1320.3h-2.243ZM950.23 1045.19h2.243V1320.3h-2.243ZM952.48 1123.79h2.243V1320.3h-2.243ZM954.72 960.98h2.243V1320.3h-2.243ZM956.96 1078.88h2.243V1320.3h-2.243ZM959.21 1123.79h2.243V1320.3h-2.243ZM961.45 989.05h2.243V1320.3h-2.243ZM963.69 1112.57h2.243V1320.3h-2.243ZM965.94 1179.94h2.243V1320.3h-2.243ZM968.18 1241.70h2.243V1320.3h-2.243ZM970.42 1241.70h2.243V1320.3h-2.243ZM972.67 1224.85h2.243V1320.3h-2.243ZM974.91 1067.65h2.243V1320.3h-2.243ZM977.15 1011.51h2.243V1320.3h-2.243ZM979.40 1151.87h2.243V1320.3h-2.243ZM981.64 1151.87h2.243V1320.3h-2.243ZM983.88 1129.41h2.243V1320.3h-2.243ZM986.13 1017.12h2.243V1320.3h-2.243ZM988.37 938.52h2.243V1320.3h-2.243ZM990.61 1050.81h2.243V1320.3h-2.243ZM992.86 938.52h2.243V1320.3h-2.243ZM995.10 1106.95h2.243V1320.3h-2.243ZM997.34 1022.73h2.243V1320.3h-2.243ZM999.59 1022.73h2.243V1320.3h-2.243ZM1001.83 1090.11h2.243V1320.3h-2.243ZM1004.07 1039.58h2.243V1320.3h-2.243ZM1006.31 966.59h2.243V1320.3h-2.243ZM1008.56 1140.64h2.243V1320.3h-2.243ZM1010.80 1140.64h2.243V1320.3h-2.243ZM1013.04 1028.35h2.243V1320.3h-2.243ZM1015.29 1230.47h2.243V1320.3h-2.243ZM1017.53 1168.71h2.243V1320.3h-2.243ZM1019.77 994.66h2.243V1320.3h-2.243ZM1022.02 1208.01h2.243V1320.3h-2.243ZM1024.26 1208.01h2.243V1320.3h-2.243ZM1026.50 1202.40h2.243V1320.3h-2.243ZM1028.75 1236.08h2.243V1320.3h-2.243ZM1205.96 1292.23h2.243V1320.3h-2.243ZM1208.21 1292.23h2.243V1320.3h-2.243ZM1210.45 1292.23h2.243V1320.3h-2.243ZM1212.69 1264.16h2.243V1320.3h-2.243ZM1214.94 1135.02h2.243V1320.3h-2.243ZM1217.18 1208.01h2.243V1320.3h-2.243ZM1219.42 932.90h2.243V1320.3h-2.243ZM1221.67 1056.42h2.243V1320.3h-2.243ZM1223.91 989.05h2.243V1320.3h-2.243ZM1226.15 831.84h2.243V1320.3h-2.243ZM1228.40 938.52h2.243V1320.3h-2.243ZM1230.64 899.22h2.243V1320.3h-2.243ZM1232.88 1017.12h2.243V1320.3h-2.243ZM1235.13 1219.24h2.243V1320.3h-2.243ZM1237.37 1241.70h2.243V1320.3h-2.243ZM1239.61 1230.47h2.243V1320.3h-2.243ZM1241.86 977.82h2.243V1320.3h-2.243ZM1244.10 1112.57h2.243V1320.3h-2.243ZM1246.34 1112.57h2.243V1320.3h-2.243ZM1248.59 1067.65h2.243V1320.3h-2.243ZM1250.83 1208.01h2.243V1320.3h-2.243ZM1253.07 994.66h2.243V1320.3h-2.243ZM1255.32 994.66h2.243V1320.3h-2.243ZM1257.56 972.20h2.243V1320.3h-2.243ZM1259.80 955.36h2.243V1320.3h-2.243ZM1262.05 1067.65h2.243V1320.3h-2.243ZM1264.29 932.90h2.243V1320.3h-2.243ZM1266.53 1106.95h2.243V1320.3h-2.243ZM1268.78 1252.93h2.243V1320.3h-2.243ZM1271.02 1224.85h2.243V1320.3h-2.243ZM1273.26 1135.02h2.243V1320.3h-2.243ZM1275.51 927.29h2.243V1320.3h-2.243ZM1277.75 1000.28h2.243V1320.3h-2.243ZM1279.99 966.59h2.243V1320.3h-2.243ZM1282.24 1191.17h2.243V1320.3h-2.243ZM1284.48 1146.25h2.243V1320.3h-2.243ZM1286.72 1039.58h2.243V1320.3h-2.243ZM1288.96 1140.64h2.243V1320.3h-2.243ZM1291.21 1196.78h2.243V1320.3h-2.243ZM1293.45 1196.78h2.243V1320.3h-2.243ZM1295.69 1241.70h2.243V1320.3h-2.243ZM1297.94 1208.01h2.243V1320.3h-2.243ZM1300.18 1106.95h2.243V1320.3h-2.243ZM1302.42 1106.95h2.243V1320.3h-2.243ZM1304.67 916.06h2.243V1320.3h-2.243ZM1306.91 960.98h2.243V1320.3h-2.243ZM1309.15 960.98h2.243V1320.3h-2.243ZM1311.40 932.90h2.243V1320.3h-2.243ZM1313.64 932.90h2.243V1320.3h-2.243ZM1315.88 927.29h2.243V1320.3h-2.243ZM1318.13 1000.28h2.243V1320.3h-2.243ZM1320.37 983.43h2.243V1320.3h-2.243ZM1322.61 983.43h2.243V1320.3h-2.243ZM1324.86 983.43h2.243V1320.3h-2.243ZM1327.10 1168.71h2.243V1320.3h-2.243ZM1329.34 1168.71h2.243V1320.3h-2.243ZM1331.59 1135.02h2.243V1320.3h-2.243ZM1333.83 994.66h2.243V1320.3h-2.243ZM1336.07 1135.02h2.243V1320.3h-2.243ZM1338.32 1202.40h2.243V1320.3h-2.243ZM1340.56 1202.40h2.243V1320.3h-2.243ZM1342.80 1224.85h2.243V1320.3h-2.243ZM1345.05 1146.25h2.243V1320.3h-2.243ZM1347.29 1011.51h2.243V1320.3h-2.243ZM1349.53 1224.85h2.243V1320.3h-2.243ZM1351.78 1191.17h2.243V1320.3h-2.243ZM1528.99 1168.71h2.243V1320.3h-2.243ZM1531.24 1151.87h2.243V1320.3h-2.243ZM1533.48 1151.87h2.243V1320.3h-2.243ZM1535.72 1000.28h2.243V1320.3h-2.243ZM1537.97 1140.64h2.243V1320.3h-2.243ZM1540.21 1005.89h2.243V1320.3h-2.243ZM1542.45 1011.51h2.243V1320.3h-2.243ZM1544.70 1028.35h2.243V1320.3h-2.243ZM1546.94 1157.48h2.243V1320.3h-2.243ZM1549.18 1224.85h2.243V1320.3h-2.243ZM1551.43 1230.47h2.243V1320.3h-2.243ZM1553.67 1196.78h2.243V1320.3h-2.243ZM1555.91 1196.78h2.243V1320.3h-2.243ZM1558.16 1073.26h2.243V1320.3h-2.243ZM1560.40 1039.58h2.243V1320.3h-2.243ZM1562.64 1185.55h2.243V1320.3h-2.243ZM1564.89 1185.55h2.243V1320.3h-2.243ZM1567.13 1213.63h2.243V1320.3h-2.243ZM1569.37 1056.42h2.243V1320.3h-2.243ZM1571.61 1017.12h2.243V1320.3h-2.243ZM1573.86 1202.40h2.243V1320.3h-2.243ZM1576.10 1264.16h2.243V1320.3h-2.243ZM1578.34 1067.65h2.243V1320.3h-2.243ZM1580.59 1090.11h2.243V1320.3h-2.243ZM1582.83 1090.11h2.243V1320.3h-2.243ZM1585.07 1033.96h2.243V1320.3h-2.243ZM1587.32 1123.79h2.243V1320.3h-2.243ZM1589.56 1202.40h2.243V1320.3h-2.243ZM1591.80 1213.63h2.243V1320.3h-2.243ZM1594.05 1017.12h2.243V1320.3h-2.243ZM1596.29 1224.85h2.243V1320.3h-2.243ZM1598.53 1219.24h2.243V1320.3h-2.243ZM1600.78 1219.24h2.243V1320.3h-2.243ZM1603.02 1135.02h2.243V1320.3h-2.243ZM1605.26 1196.78h2.243V1320.3h-2.243ZM1607.51 1196.78h2.243V1320.3h-2.243ZM1609.75 1241.70h2.243V1320.3h-2.243ZM1611.99 1264.16h2.243V1320.3h-2.243ZM1614.24 1264.16h2.243V1320.3h-2.243ZM1616.48 1264.16h2.243V1320.3h-2.243ZM1618.72 1208.01h2.243V1320.3h-2.243ZM1620.97 1208.01h2.243V1320.3h-2.243ZM1623.21 1146.25h2.243V1320.3h-2.243ZM1625.45 1073.26h2.243V1320.3h-2.243ZM1627.70 1073.26h2.243V1320.3h-2.243ZM1629.94 983.43h2.243V1320.3h-2.243ZM1632.18 983.43h2.243V1320.3h-2.243ZM1634.43 983.43h2.243V1320.3h-2.243ZM1636.67 1135.02h2.243V1320.3h-2.243ZM1638.91 1230.47h2.243V1320.3h-2.243ZM1641.16 1067.65h2.243V1320.3h-2.243ZM1643.40 1185.55h2.243V1320.3h-2.243ZM1645.64 1236.08h2.243V1320.3h-2.243ZM1647.89 1118.18h2.243V1320.3h-2.243ZM1650.13 1196.78h2.243V1320.3h-2.243ZM1652.37 1112.57h2.243V1320.3h-2.243ZM1654.62 1140.64h2.243V1320.3h-2.243ZM1656.86 1151.87h2.243V1320.3h-2.243ZM1659.10 1151.87h2.243V1320.3h-2.243ZM1661.35 1224.85h2.243V1320.3h-2.243ZM1663.59 1224.85h2.243V1320.3h-2.243ZM1665.83 1264.16h2.243V1320.3h-2.243ZM1668.07 1252.93h2.243V1320.3h-2.243ZM1670.32 1252.93h2.243V1320.3h-2.243ZM1672.56 1281.00h2.243V1320.3h-2.243ZM1674.80 1286.61h2.243V1320.3h-2.243Z" fill="#229070"/>
</g>
<line x1="155.0" y1="1320.3" x2="2416.2" y2="1320.3" stroke="#707070" stroke-width="2"/>
<line x1="155.0" y1="815.0" x2="155.0" y2="1320.3" stroke="#707070" stroke-width="2"/>
<line x1="144" y1="1320.5" x2="155.0" y2="1320.5" stroke="#808080" stroke-width="1"/>
<text x="133.5" y="1325.8" font-size="21.5" fill="#333" text-anchor="end" letter-spacing="0.3">0</text>
<line x1="144" y1="1264.5" x2="155.0" y2="1264.5" stroke="#808080" stroke-width="1"/>
<text x="133.5" y="1269.8" font-size="21.5" fill="#333" text-anchor="end" letter-spacing="0.3">10</text>
<line x1="144" y1="1208.5" x2="155.0" y2="1208.5" stroke="#808080" stroke-width="1"/>
<text x="133.5" y="1213.8" font-size="21.5" fill="#333" text-anchor="end" letter-spacing="0.3">20</text>
<line x1="144" y1="1152.5" x2="155.0" y2="1152.5" stroke="#808080" stroke-width="1"/>
<text x="133.5" y="1157.8" font-size="21.5" fill="#333" text-anchor="end" letter-spacing="0.3">30</text>
<line x1="144" y1="1096.5" x2="155.0" y2="1096.5" stroke="#808080" stroke-width="1"/>
<text x="133.5" y="1101.8" font-size="21.5" fill="#333" text-anchor="end" letter-spacing="0.3">40</text>
<line x1="144" y1="1040.5" x2="155.0" y2="1040.5" stroke="#808080" stroke-width="1"/>
<text x="133.5" y="1045.8" font-size="21.5" fill="#333" text-anchor="end" letter-spacing="0.3">50</text>
<line x1="144" y1="983.5" x2="155.0" y2="983.5" stroke="#808080" stroke-width="1"/>
<text x="133.5" y="988.8" font-size="21.5" fill="#333" text-anchor="end" letter-spacing="0.3">60</text>
<line x1="144" y1="927.5" x2="155.0" y2="927.5" stroke="#808080" stroke-width="1"/>
<text x="133.5" y="932.8" font-size="21.5" fill="#333" text-anchor="end" letter-spacing="0.3">70</text>
<line x1="144" y1="871.5" x2="155.0" y2="871.5" stroke="#808080" stroke-width="1"/>
<text x="133.5" y="876.8" font-size="21.5" fill="#333" text-anchor="end" letter-spacing="0.3">80</text>
<line x1="144" y1="815.5" x2="155.0" y2="815.5" stroke="#808080" stroke-width="1"/>
<text x="133.5" y="820.8" font-size="21.5" fill="#333" text-anchor="end" letter-spacing="0.3">90</text>
<line x1="155.5" y1="1322.3" x2="155.5" y2="1332.3" stroke="#a0a0a0" stroke-width="1"/>
<text x="155.0" y="1357" font-size="21.6" fill="#111" text-anchor="middle" letter-spacing="0.6">lun. 06</text>
<line x1="478.5" y1="1322.3" x2="478.5" y2="1332.3" stroke="#a0a0a0" stroke-width="1"/>
<text x="478.0285714285714" y="1357" font-size="21.6" fill="#111" text-anchor="middle" letter-spacing="0.6">mar. 07</text>
<line x1="801.5" y1="1322.3" x2="801.5" y2="1332.3" stroke="#a0a0a0" stroke-width="1"/>
<text x="801.0571428571428" y="1357" font-size="21.6" fill="#111" text-anchor="middle" letter-spacing="0.6">mer. 08</text>
<line x1="1124.5" y1="1322.3" x2="1124.5" y2="1332.3" stroke="#a0a0a0" stroke-width="1"/>
<text x="1124.0857142857142" y="1357" font-size="21.6" fill="#111" text-anchor="middle" letter-spacing="0.6">jeu. 09</text>
<line x1="1447.5" y1="1322.3" x2="1447.5" y2="1332.3" stroke="#a0a0a0" stroke-width="1"/>
<text x="1447.1142857142856" y="1357" font-size="21.6" fill="#111" text-anchor="middle" letter-spacing="0.6">ven. 10</text>
<line x1="1770.5" y1="1322.3" x2="1770.5" y2="1332.3" stroke="#a0a0a0" stroke-width="1"/>
<text x="1770.142857142857" y="1357" font-size="21.6" fill="#111" text-anchor="middle" letter-spacing="0.6">sam. 11</text>
<line x1="2093.5" y1="1322.3" x2="2093.5" y2="1332.3" stroke="#a0a0a0" stroke-width="1"/>
<text x="2093.1714285714284" y="1357" font-size="21.6" fill="#111" text-anchor="middle" letter-spacing="0.6">dim. 12</text>
<text transform="translate(86.3 1067.5) rotate(-90)" font-size="23" fill="#333" text-anchor="middle">kW</text>
</svg>
<div style="position:absolute;left:1990px;top:69px;width:415px;height:27px;background:#fff;box-shadow:3px 1px 4px rgba(0,0,0,0.18);border-radius:0 4px 4px 0"></div>
<div style="position:absolute;left:1990px;top:52px;width:425px;height:17px;background:#fff"></div>
<div style="position:absolute;left:1990px;top:61px;width:415px;height:38px;text-align:center;font-weight:bold;font-size:25.5px;line-height:38px;color:#000">LHB-site-L764</div>
<div style="position:absolute;left:1990px;top:107px;width:415px;height:60px;box-sizing:border-box;border:3px solid #7a7a7a;border-radius:11px;background:#fff;font-size:28px;line-height:58px;padding-left:20px;text-align:center;color:#000;white-space:pre">Consommation: 53 kWh</div>
<div style="position:absolute;left:1990px;top:177px;width:415px;height:60px;box-sizing:border-box;border:3px solid #7a7a7a;border-radius:11px;background:#fff;font-size:28px;line-height:58px;padding-left:20px;text-align:center;color:#000;white-space:pre">P Max :  5 kW</div>
<div style="position:absolute;left:1990px;top:247px;width:415px;height:60px;box-sizing:border-box;border:3px solid #7a7a7a;border-radius:11px;background:#fff;font-size:28px;line-height:58px;padding-left:20px;text-align:center;color:#000;white-space:pre">P min : 1 kW</div>
<div style="position:absolute;left:1048px;top:542px;width:522px;height:70px;background:rgba(255,255,255,0.88);border-radius:12px"></div>
<div style="position:absolute;left:1048px;top:542px;width:530px;height:70px;text-align:center;font-weight:bold;font-size:31px;letter-spacing:0.7px;line-height:74px;color:#111">dimanche 12 avril 2026</div>
<div style="position:absolute;left:560px;top:805px;width:416px;height:61px;box-sizing:border-box;border:3px solid #7a7a7a;border-radius:11px;background:#fff;font-size:28px;line-height:59px;padding-left:20px;text-align:center;color:#000;white-space:pre">Consommation: 1 979 kWh</div>
<div style="position:absolute;left:1098px;top:805px;width:416px;height:61px;box-sizing:border-box;border:3px solid #7a7a7a;border-radius:11px;background:#fff;font-size:28px;line-height:59px;padding-left:20px;text-align:center;color:#000;white-space:pre">P Max :  87 kW</div>
<div style="position:absolute;left:1608px;top:805px;width:416px;height:61px;box-sizing:border-box;border:3px solid #7a7a7a;border-radius:11px;background:#fff;font-size:28px;line-height:59px;padding-left:20px;text-align:center;color:#000;white-space:pre">P min : 1 kW</div>
<svg style="position:absolute;left:176px;top:49px" width="482" height="78" viewBox="176 49 482 78">
<defs><linearGradient id="eg" x1="0" y1="0" x2="0" y2="1"><stop offset="0" stop-color="#00f0c8"/><stop offset="0.5" stop-color="#00eac2"/><stop offset="0.55" stop-color="#00c8a4"/><stop offset="1" stop-color="#00c8a4"/></linearGradient></defs>
<rect x="176" y="49" width="482" height="78" fill="#0a0a18"/>
<g fill="none" stroke="url(#eg)" stroke-width="6.8" stroke-linecap="round">
<path d="M191.5 91.2 H210.8 C210.8 85 206.5 82.6 201.5 82.6 C195 82.6 191.5 87.5 191.5 94.5 C191.5 102 196 106.6 202 106.6 C205.5 106.6 208.5 105.5 210.8 103.6"/>
<path d="M198.6 74.8 L205 71.6" stroke="#00f0c8" stroke-width="6"/>
<path d="M238.6 86.4 C236.5 83.8 233.5 82.6 230 82.6 C223.5 82.6 220.2 88 220.2 94.5 C220.2 101.5 224 106.6 230 106.6 C233.5 106.6 236.5 105.2 239 102.6"/>
<ellipse cx="257" cy="94.6" rx="10.2" ry="12"/>
</g>
<g fill="none" stroke="#fff" stroke-width="6.8" stroke-linecap="round" stroke-linejoin="round">
<path d="M275.8 86.8 L283.3 108 L291.8 81.5 L299.8 108 L313.3 67.5"/>
<path d="M316.5 86.2 C319 83.8 322 82.6 325.5 82.6 C331.5 82.6 334.6 86 334.6 91.5 V107.5"/>
<ellipse cx="325.3" cy="99" rx="9" ry="7.6"/>
<path d="M346.8 74.5 V101 C346.8 105.5 349 107.5 353.2 107.5"/>
<path d="M361.6 74.5 V101 C361.6 105.5 364 107.5 368.6 107.5"/>
<path d="M341 82 H371"/>
</g>
<ellipse cx="434" cy="88.9" rx="25.9" ry="28" fill="#00b4e0"/>
<text x="434" y="97" font-size="24" fill="#fff" text-anchor="middle" letter-spacing="-1.5" style="font-weight:300">Rte</text>
<line x1="424" y1="92" x2="440" y2="92" stroke="#fff" stroke-width="1.2"/>
<text x="468" y="79" font-size="11.3" fill="#009fd0" font-weight="bold" letter-spacing="-0.45">Le réseau</text>
<text x="468" y="92" font-size="11.3" fill="#009fd0" font-weight="bold" letter-spacing="-0.45">de transport</text>
<text x="468" y="105" font-size="11.3" fill="#009fd0" font-weight="bold" letter-spacing="-0.45">d’électricité</text>
<rect x="546.5" y="61" width="100.5" height="56" fill="#fff"/>
<rect x="553.2" y="68.7" width="7.8" height="6.7" fill="#2b3b8c"/><rect x="563.6" y="68.7" width="8.3" height="6.7" fill="#e1000f"/>
<text x="552.5" y="84.8" font-size="6.6" font-weight="bold" fill="#333" letter-spacing="-0.2">RÉPUBLIQUE</text>
<text x="552.5" y="93" font-size="6.6" font-weight="bold" fill="#333" letter-spacing="-0.2">FRANÇAISE</text>
<g stroke="#999" stroke-width="0.8"><line x1="553" y1="99" x2="562" y2="99"/><line x1="553" y1="104" x2="562" y2="104"/><line x1="553" y1="109" x2="565" y2="109"/></g>
<rect x="607" y="66.5" width="35" height="45" fill="none" stroke="#4a78c8" stroke-width="1.2"/>
<text x="624.5" y="75" font-size="6.4" font-weight="bold" fill="#e52b2b" text-anchor="middle" letter-spacing="0.6">ADEME</text>
<circle cx="624.2" cy="86.8" r="8.6" fill="#2653a8"/>
<path d="M620 82 q4 2 3 6 q-2 3 2 5" stroke="#9fb6e0" stroke-width="1.2" fill="none"/>
<g stroke="#ea5050" stroke-width="1.6"><line x1="612" y1="100.5" x2="637" y2="100.5"/><line x1="612" y1="104" x2="637" y2="104"/><line x1="612" y1="107.5" x2="637" y2="107.5"/></g>
</svg>
<svg style="position:absolute;left:160px;top:130px" width="510" height="135" viewBox="160 130 510 135">
<defs><linearGradient id="wg" x1="0" y1="0" x2="0" y2="1"><stop offset="0" stop-color="#00caac"/><stop offset="1" stop-color="#00b595"/></linearGradient><symbol id="wave" viewBox="0 0 100 50" preserveAspectRatio="none"><rect width="100" height="50" fill="url(#wg)"/><path d="M15 0 C30 8 48 20 64 22 C80 23.5 92 18 100 13 V0 Z" fill="#00f0c9"/><path d="M27 0 C40 6 55 11 68 11 C80 11 92 6 100 2 V0 Z" fill="#00a38a"/></symbol></defs>
<path d="M169 135.3 H661 V259 H169 Z" fill="none" stroke="#dadada" stroke-width="0"/>
<rect x="169.1" y="135.4" width="491.6" height="3.1" fill="#dadada"/>
<rect x="169.1" y="135.4" width="3.1" height="123.2" fill="#dadada"/>
<rect x="657.6" y="135.4" width="3.1" height="123.2" fill="#dadada"/>
<rect x="169.1" y="253.4" width="491.6" height="5.2" fill="#dadada"/>
<rect x="169.1" y="188.7" width="491.6" height="5.7" fill="#dadada"/>
<rect x="288.9" y="135.4" width="5.6" height="123.2" fill="#dadada"/>
<rect x="411.4" y="135.4" width="5.6" height="123.2" fill="#dadada"/>
<rect x="533.4" y="135.4" width="5.6" height="123.2" fill="#dadada"/>
<rect x="172.7" y="139" width="115.69999999999999" height="49.2" fill="none" stroke="#e4e4e4" stroke-width="1"/>
<rect x="172.7" y="194.9" width="115.69999999999999" height="58" fill="none" stroke="#e4e4e4" stroke-width="1"/>
<rect x="295.0" y="139" width="115.89999999999998" height="49.2" fill="none" stroke="#e4e4e4" stroke-width="1"/>
<rect x="295.0" y="194.9" width="115.89999999999998" height="58" fill="none" stroke="#e4e4e4" stroke-width="1"/>
<rect x="417.5" y="139" width="115.39999999999998" height="49.2" fill="none" stroke="#e4e4e4" stroke-width="1"/>
<rect x="417.5" y="194.9" width="115.39999999999998" height="58" fill="none" stroke="#e4e4e4" stroke-width="1"/>
<rect x="539.5" y="139" width="117.60000000000002" height="49.2" fill="none" stroke="#e4e4e4" stroke-width="1"/>
<rect x="539.5" y="194.9" width="117.60000000000002" height="58" fill="none" stroke="#e4e4e4" stroke-width="1"/>
<use href="#wave" x="180.2" y="195.2" width="106" height="54.6"/>
<use href="#wave" x="302" y="196" width="106" height="55.5"/>
<use href="#wave" x="424" y="196" width="106" height="55.5"/>
<use href="#wave" x="544" y="196" width="106" height="55.5"/>
<text x="230.5" y="173.6" font-size="32" fill="#111" stroke="#111" stroke-width="1.3" text-anchor="middle">J</text>
<text x="320.5" y="173.6" font-size="32" fill="#111" stroke="#111" stroke-width="1.3" text-anchor="middle">J</text>
<path d="M346.9 163.8 H360.9 M353.9 156.6 V171" stroke="#111" stroke-width="2.4"/>
<path d="M386 174.3 V152.8 L380.8 158" fill="none" stroke="#111" stroke-width="2.6"/>
<text x="443" y="173.6" font-size="32" fill="#111" stroke="#111" stroke-width="1.3" text-anchor="middle">J</text>
<path d="M469.3 163.8 H483.3 M476.3 156.6 V171" stroke="#111" stroke-width="2.4"/>
<text x="509" y="174.5" font-size="32" font-weight="bold" fill="#111" text-anchor="middle">2</text>
<text x="565" y="173.6" font-size="32" fill="#111" stroke="#111" stroke-width="1.3" text-anchor="middle">J</text>
<path d="M591.2 163.8 H605.2 M598.2 156.6 V171" stroke="#111" stroke-width="2.4"/>
<text x="630.8" y="174.5" font-size="32" font-weight="bold" fill="#111" text-anchor="middle">3</text>
</svg>
<div style="position:absolute;left:2322px;top:1322px;width:115.5px;height:58px;background:#fff;border-radius:0 0 6px 0"></div>
<svg style="position:absolute;left:2322px;top:1322px" width="116" height="58" viewBox="2322 1322 116 58">
<path d="M2361.5 1340 C2358.5 1336 2355 1334.8 2349.5 1334.8 C2341 1334.8 2335.6 1341.5 2335.6 1348.5 C2335.6 1356 2341 1362 2349 1362 C2357.5 1362 2362.5 1356.5 2362.5 1349.5 H2350" fill="none" stroke="#1a6fc0" stroke-width="5.5"/>
<text x="2376.5" y="1363.5" font-size="36" font-weight="bold" fill="#1a6fc0" text-anchor="middle" letter-spacing="-1">2</text>
<path d="M2398 1325 L2386 1346 L2392 1346 L2389 1364 L2397 1343 L2392 1343 Z" fill="#ef5a30"/>
<g fill="#f59d2a"><path d="M2396 1339.5 H2425 L2421 1345 H2393 Z"/><path d="M2393 1348.5 H2420 L2416 1354 H2390 Z"/><path d="M2390 1357.5 H2416 L2412 1363 H2387 Z"/></g>
<text x="2409" y="1334.5" font-size="6" font-weight="bold" fill="#ef6a30" text-anchor="middle">FRANCE</text>
<line x1="2340" y1="1367" x2="2414" y2="1367" stroke="#6a9ad8" stroke-width="1"/>
</svg>
<div style="position:absolute;left:2510px;top:0;width:1px;height:1415px;background:#000"></div>
<div style="position:absolute;left:0;top:1414px;width:2511px;height:1px;background:#000"></div>
</body></html>
